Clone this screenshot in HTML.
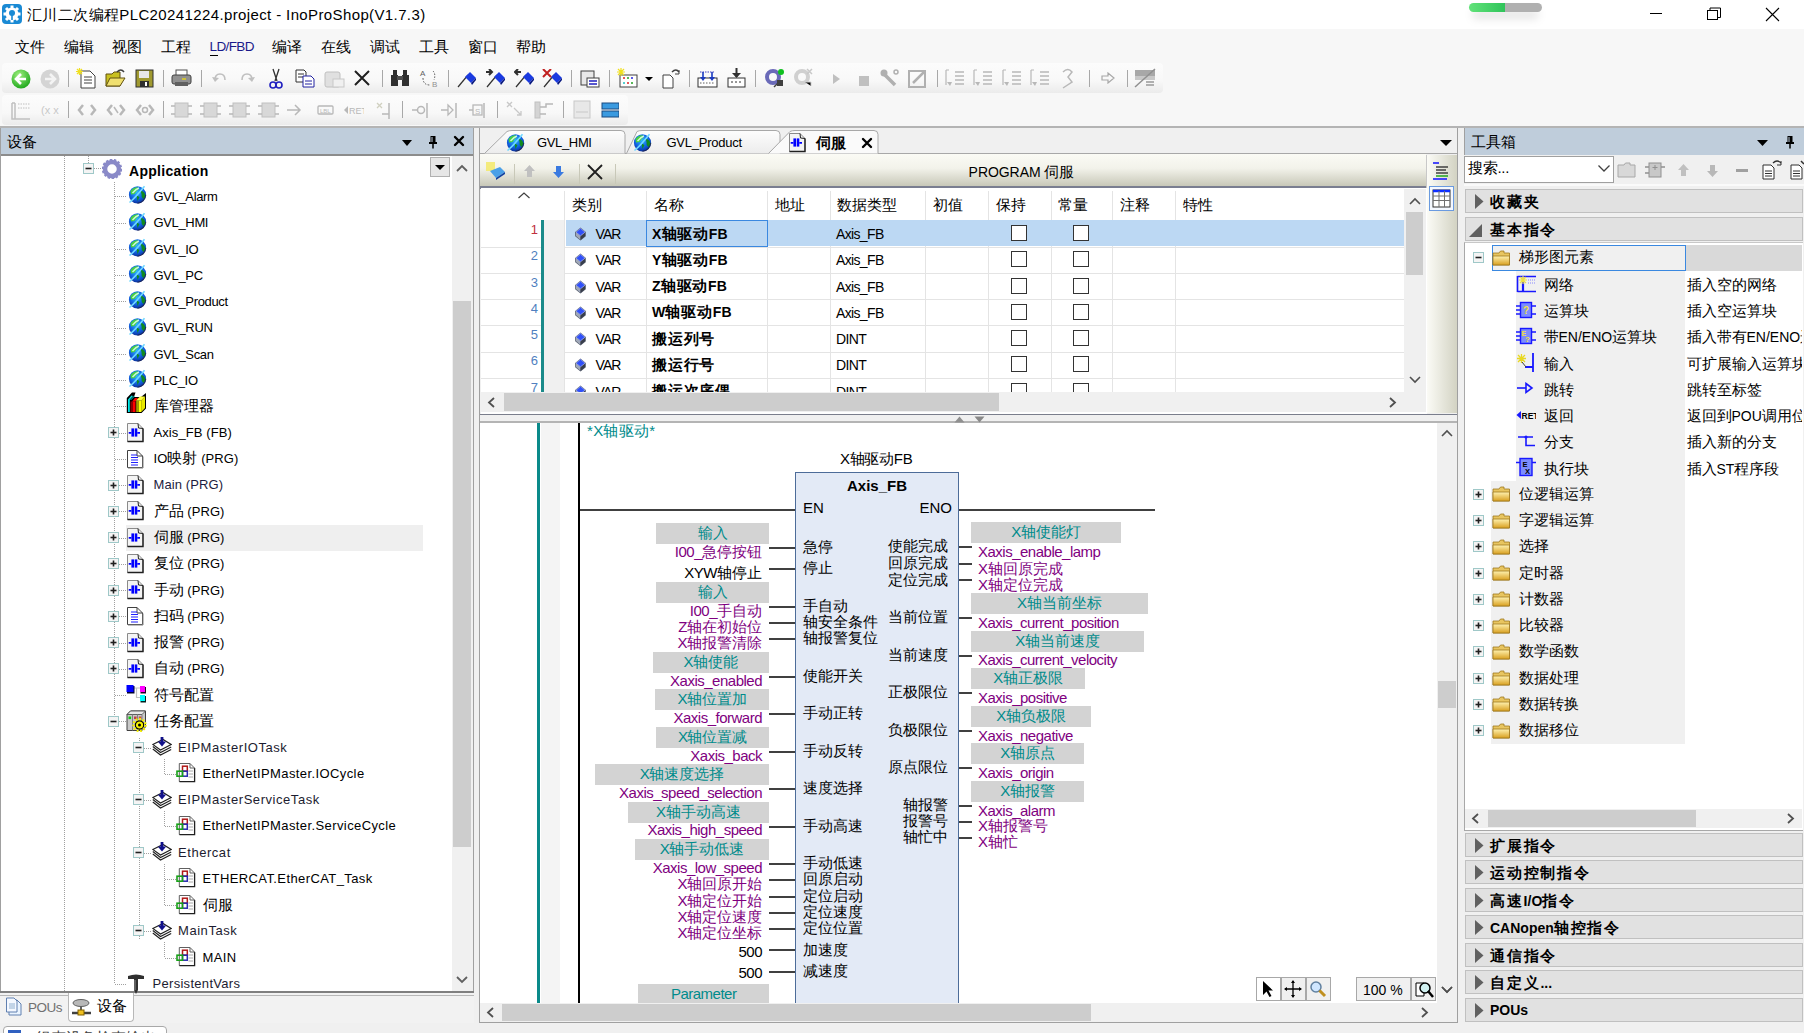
<!DOCTYPE html><html><head><meta charset="utf-8"><style>
html,body{margin:0;padding:0;width:1804px;height:1033px;overflow:hidden;background:#f0f0f0;position:relative}
body div{position:absolute}
.t{white-space:nowrap;line-height:1;font-family:"Liberation Sans",sans-serif}
span{line-height:1}
.nm span{letter-spacing:0.75px}
.ls0 span{letter-spacing:0}
.acc span{letter-spacing:1.8px}
</style></head><body>
<div style="left:0px;top:0px;width:1804px;height:29px;background:#fff"></div>
<svg style="position:absolute;left:2px;top:4px;" width="20" height="20" viewBox="0 0 20 20"><rect x="0" y="0" width="20" height="20" rx="4" fill="#1a8ad4"/>
<circle cx="10" cy="10" r="6.5" fill="#fff"/><path d="M10 1.5 V18.5 M1.5 10 H18.5 M4 4 L16 16 M16 4 L4 16" stroke="#fff" stroke-width="3"/>
<circle cx="10" cy="9" r="3" fill="#1a8ad4"/><path d="M10 11 V16" stroke="#1a8ad4" stroke-width="1.6"/></svg>
<div class="t" style="left:27px;top:6.6px;font-size:15px;color:#000;letter-spacing:0.38px"><span style="font-size:15px">汇川二次编程</span>PLC20241224.project - InoProShop(V1.7.3)</div>
<div style="left:1472px;top:10px;width:67px;height:9px;border-radius:5px;background:rgba(0,0,0,0.10);filter:blur(4px)"></div>
<div style="left:1469px;top:3px;width:73px;height:9px;border-radius:4.5px;background:linear-gradient(to right,#62e27a 0,#2fc45a 36px,#b0b0b0 36px)"></div>
<div style="left:1650px;top:13px;width:12px;height:1px;background:#000"></div>
<svg style="position:absolute;left:1706px;top:7px;" width="16" height="14" viewBox="0 0 16 14"><rect x="1.5" y="3.5" width="10" height="9" fill="none" stroke="#000"/><path d="M4 3.5 V1 H14.5 V10.5 H12" fill="none" stroke="#000"/></svg>
<svg style="position:absolute;left:1765px;top:7px;" width="15" height="15" viewBox="0 0 15 15"><path d="M1 1 L14 14 M14 1 L1 14" stroke="#000" stroke-width="1.1"/></svg>
<div style="left:0px;top:29px;width:1804px;height:97px;background:#f7f7f7"></div>
<div class="t" style="left:15px;top:38.7px;font-size:15px;color:#000;"><span style="font-size:15px">文件</span></div>
<div class="t" style="left:64px;top:38.7px;font-size:15px;color:#000;"><span style="font-size:15px">编辑</span></div>
<div class="t" style="left:112px;top:38.7px;font-size:15px;color:#000;"><span style="font-size:15px">视图</span></div>
<div class="t" style="left:161px;top:38.7px;font-size:15px;color:#000;"><span style="font-size:15px">工程</span></div>
<div class="t" style="left:272px;top:38.7px;font-size:15px;color:#000;"><span style="font-size:15px">编译</span></div>
<div class="t" style="left:321px;top:38.7px;font-size:15px;color:#000;"><span style="font-size:15px">在线</span></div>
<div class="t" style="left:370px;top:38.7px;font-size:15px;color:#000;"><span style="font-size:15px">调试</span></div>
<div class="t" style="left:419px;top:38.7px;font-size:15px;color:#000;"><span style="font-size:15px">工具</span></div>
<div class="t" style="left:468px;top:38.7px;font-size:15px;color:#000;"><span style="font-size:15px">窗口</span></div>
<div class="t" style="left:516px;top:38.7px;font-size:15px;color:#000;"><span style="font-size:15px">帮助</span></div>
<div class="t" style="left:209.5px;top:40px;font-size:13.5px;color:#1a1a8a;letter-spacing:-0.6px">LD/FBD</div>
<div style="left:209.5px;top:55px;width:8px;height:1px;background:#000"></div>
<div style="left:2px;top:63px;width:1161px;height:30px;background:linear-gradient(#fcfcfc,#f8f8f8 60%,#ebebeb);border-radius:4px"></div>
<div style="left:2px;top:95px;width:626px;height:30px;background:linear-gradient(#fcfcfc,#f8f8f8 60%,#ebebeb);border-radius:4px"></div>
<div style="left:0px;top:126px;width:474px;height:1px;background:#a8a8a8"></div>
<div style="left:0px;top:127px;width:474px;height:28px;background:#bfcddb"></div>
<div style="left:0px;top:154px;width:474px;height:2px;background:#8c8c8c"></div>
<div style="left:0px;top:127px;width:1px;height:866px;background:#a0a0a0"></div>
<div style="left:473px;top:127px;width:1px;height:866px;background:#a0a0a0"></div>
<div class="t" style="left:7px;top:133.5px;font-size:15px;color:#000;"><span style="font-size:15px">设备</span></div>
<svg style="position:absolute;left:402px;top:140px;" width="10" height="6" viewBox="0 0 10 6"><path d="M0 0 H10 L5.0 6Z" fill="#000"/></svg>
<svg style="position:absolute;left:428px;top:135px;" width="10" height="14" viewBox="0 0 10 14"><path d="M2.5 1 H7.5 V7 H9 V9 H1 V7 H2.5Z" fill="#000"/><path d="M5 9 V13.5" stroke="#000" stroke-width="1.5"/><path d="M4 2 V7" stroke="#bfcddb" stroke-width="1"/></svg>
<svg style="position:absolute;left:453px;top:135px;" width="12" height="12" viewBox="0 0 12 12"><path d="M2 2 L10 10 M10 2 L2 10" stroke="#000" stroke-width="2.4" stroke-linecap="round"/></svg>
<div style="left:1px;top:156px;width:472px;height:836px;background:#fff"></div>
<div style="left:0px;top:991px;width:474px;height:2px;background:#808080"></div>
<div style="left:452px;top:156px;width:21px;height:835px;background:#f0f0f0"></div>
<div style="left:453px;top:301px;width:18px;height:546px;background:#cdcdcd"></div>
<svg style="position:absolute;left:455px;top:163px;" width="14" height="10" viewBox="0 0 14 10"><path d="M2 8 L7 3 L12 8" fill="none" stroke="#606060" stroke-width="1.8"/></svg>
<svg style="position:absolute;left:455px;top:975px;" width="14" height="10" viewBox="0 0 14 10"><path d="M2 2 L7 7 L12 2" fill="none" stroke="#606060" stroke-width="1.8"/></svg>
<div style="left:430px;top:157px;width:20px;height:20px;background:#e6e6e6;border:1px solid #b0b0b0;box-sizing:border-box"></div>
<div style="left:0px;top:991px;width:474px;height:2px;background:#808080"></div>
<svg style="position:absolute;left:435px;top:165px;" width="10" height="5" viewBox="0 0 10 5"><path d="M0 0 H10 L5.0 5Z" fill="#000"/></svg>
<div style="left:0px;top:993px;width:478px;height:30px;background:#f2f2f2"></div>
<div style="left:0px;top:995px;width:478px;height:1px;background:#b8b8b8"></div>
<div style="left:68px;top:993px;width:66px;height:29px;background:#fff;border:1px solid #b8b8b8;border-top:none;border-radius:0 0 4px 4px;box-sizing:border-box"></div>
<div style="left:0px;top:1023px;width:478px;height:10px;background:#f0f0f0"></div>
<div style="left:3px;top:1026px;width:164px;height:10px;background:#fff;border:1px solid #a8a8a8;border-radius:4px 4px 0 0;box-sizing:border-box"></div>
<div style="left:64px;top:156px;width:1px;height:836px;background:repeating-linear-gradient(to bottom,#a0a0a0 0 1px,transparent 1px 2px)"></div>
<div style="left:114px;top:182px;width:1px;height:801px;background:repeating-linear-gradient(to bottom,#a0a0a0 0 1px,transparent 1px 2px)"></div>
<div style="left:139px;top:738px;width:1px;height:202px;background:repeating-linear-gradient(to bottom,#a0a0a0 0 1px,transparent 1px 2px)"></div>
<div style="left:88px;top:156px;width:1px;height:7px;background:repeating-linear-gradient(to bottom,#a0a0a0 0 1px,transparent 1px 2px)"></div>
<svg style="position:absolute;left:83px;top:162.5px;" width="11" height="11" viewBox="0 0 11 11"><rect x="0.5" y="0.5" width="10" height="10" fill="#f4f4f4" stroke="#9fc8c8"/><path d="M2.5 5.5 H8.5" stroke="#202020" stroke-width="1.6"/></svg>
<div style="left:94px;top:168.0px;width:7px;height:1px;background:repeating-linear-gradient(to right,#a0a0a0 0 1px,transparent 1px 2px)"></div>
<svg style="position:absolute;left:102px;top:159.0px;" width="20" height="20" viewBox="0 0 20 20"><circle cx="10" cy="10" r="7" fill="none" stroke="#8a8ac8" stroke-width="4.5"/><circle cx="10" cy="10" r="9" fill="none" stroke="#8a8ac8" stroke-width="2.5" stroke-dasharray="2.4 1.6"/></svg>
<div class="t" style="left:129px;top:163.8px;font-size:14px;color:#000;font-weight:bold;letter-spacing:0.3px">Application</div>
<div style="left:115px;top:196.25px;width:11px;height:1px;background:repeating-linear-gradient(to right,#a0a0a0 0 1px,transparent 1px 2px)"></div>
<svg style="position:absolute;left:127px;top:184.25px;" width="21" height="21" viewBox="0 0 21 21"><defs><radialGradient id="gg" cx="0.45" cy="0.35" r="0.75"><stop offset="0" stop-color="#30b8ff"/><stop offset="0.55" stop-color="#1060e0"/><stop offset="1" stop-color="#0a2080"/></radialGradient></defs>
<circle cx="10.5" cy="10.8" r="8.6" fill="url(#gg)"/>
<path d="M3.5 7 Q6 3.5 10.5 3.2 L12 5 Q9 7 7.5 10 L4 10.5Z" fill="#48d040"/><path d="M13.5 6.5 Q18 7.5 18.5 12 L16.5 15 Q14 13 14.5 10Z" fill="#108a20"/><path d="M9.5 11.5 L12.5 13 L10.5 17Z" fill="#108a20"/>
<path d="M2.5 18.5 Q8 14 17.5 2.2" fill="none" stroke="#70d8ff" stroke-width="1.6"/><path d="M5.5 9 Q9 5 12 4" fill="none" stroke="#e8ffff" stroke-width="1.4" opacity="0.8"/>
<path d="M18.8 11 Q18 18 10.5 19.4" fill="none" stroke="#202040" stroke-width="1.1" opacity="0.7"/></svg>
<div class="t" style="left:153.5px;top:190.05px;font-size:13px;color:#000;letter-spacing:-0.35px">GVL_Alarm</div>
<div style="left:115px;top:222.5px;width:11px;height:1px;background:repeating-linear-gradient(to right,#a0a0a0 0 1px,transparent 1px 2px)"></div>
<svg style="position:absolute;left:127px;top:210.5px;" width="21" height="21" viewBox="0 0 21 21"><defs><radialGradient id="gg" cx="0.45" cy="0.35" r="0.75"><stop offset="0" stop-color="#30b8ff"/><stop offset="0.55" stop-color="#1060e0"/><stop offset="1" stop-color="#0a2080"/></radialGradient></defs>
<circle cx="10.5" cy="10.8" r="8.6" fill="url(#gg)"/>
<path d="M3.5 7 Q6 3.5 10.5 3.2 L12 5 Q9 7 7.5 10 L4 10.5Z" fill="#48d040"/><path d="M13.5 6.5 Q18 7.5 18.5 12 L16.5 15 Q14 13 14.5 10Z" fill="#108a20"/><path d="M9.5 11.5 L12.5 13 L10.5 17Z" fill="#108a20"/>
<path d="M2.5 18.5 Q8 14 17.5 2.2" fill="none" stroke="#70d8ff" stroke-width="1.6"/><path d="M5.5 9 Q9 5 12 4" fill="none" stroke="#e8ffff" stroke-width="1.4" opacity="0.8"/>
<path d="M18.8 11 Q18 18 10.5 19.4" fill="none" stroke="#202040" stroke-width="1.1" opacity="0.7"/></svg>
<div class="t" style="left:153.5px;top:216.3px;font-size:13px;color:#000;letter-spacing:-0.35px">GVL_HMI</div>
<div style="left:115px;top:248.75px;width:11px;height:1px;background:repeating-linear-gradient(to right,#a0a0a0 0 1px,transparent 1px 2px)"></div>
<svg style="position:absolute;left:127px;top:236.75px;" width="21" height="21" viewBox="0 0 21 21"><defs><radialGradient id="gg" cx="0.45" cy="0.35" r="0.75"><stop offset="0" stop-color="#30b8ff"/><stop offset="0.55" stop-color="#1060e0"/><stop offset="1" stop-color="#0a2080"/></radialGradient></defs>
<circle cx="10.5" cy="10.8" r="8.6" fill="url(#gg)"/>
<path d="M3.5 7 Q6 3.5 10.5 3.2 L12 5 Q9 7 7.5 10 L4 10.5Z" fill="#48d040"/><path d="M13.5 6.5 Q18 7.5 18.5 12 L16.5 15 Q14 13 14.5 10Z" fill="#108a20"/><path d="M9.5 11.5 L12.5 13 L10.5 17Z" fill="#108a20"/>
<path d="M2.5 18.5 Q8 14 17.5 2.2" fill="none" stroke="#70d8ff" stroke-width="1.6"/><path d="M5.5 9 Q9 5 12 4" fill="none" stroke="#e8ffff" stroke-width="1.4" opacity="0.8"/>
<path d="M18.8 11 Q18 18 10.5 19.4" fill="none" stroke="#202040" stroke-width="1.1" opacity="0.7"/></svg>
<div class="t" style="left:153.5px;top:242.55px;font-size:13px;color:#000;letter-spacing:-0.35px">GVL_IO</div>
<div style="left:115px;top:275.0px;width:11px;height:1px;background:repeating-linear-gradient(to right,#a0a0a0 0 1px,transparent 1px 2px)"></div>
<svg style="position:absolute;left:127px;top:263.0px;" width="21" height="21" viewBox="0 0 21 21"><defs><radialGradient id="gg" cx="0.45" cy="0.35" r="0.75"><stop offset="0" stop-color="#30b8ff"/><stop offset="0.55" stop-color="#1060e0"/><stop offset="1" stop-color="#0a2080"/></radialGradient></defs>
<circle cx="10.5" cy="10.8" r="8.6" fill="url(#gg)"/>
<path d="M3.5 7 Q6 3.5 10.5 3.2 L12 5 Q9 7 7.5 10 L4 10.5Z" fill="#48d040"/><path d="M13.5 6.5 Q18 7.5 18.5 12 L16.5 15 Q14 13 14.5 10Z" fill="#108a20"/><path d="M9.5 11.5 L12.5 13 L10.5 17Z" fill="#108a20"/>
<path d="M2.5 18.5 Q8 14 17.5 2.2" fill="none" stroke="#70d8ff" stroke-width="1.6"/><path d="M5.5 9 Q9 5 12 4" fill="none" stroke="#e8ffff" stroke-width="1.4" opacity="0.8"/>
<path d="M18.8 11 Q18 18 10.5 19.4" fill="none" stroke="#202040" stroke-width="1.1" opacity="0.7"/></svg>
<div class="t" style="left:153.5px;top:268.8px;font-size:13px;color:#000;letter-spacing:-0.35px">GVL_PC</div>
<div style="left:115px;top:301.25px;width:11px;height:1px;background:repeating-linear-gradient(to right,#a0a0a0 0 1px,transparent 1px 2px)"></div>
<svg style="position:absolute;left:127px;top:289.25px;" width="21" height="21" viewBox="0 0 21 21"><defs><radialGradient id="gg" cx="0.45" cy="0.35" r="0.75"><stop offset="0" stop-color="#30b8ff"/><stop offset="0.55" stop-color="#1060e0"/><stop offset="1" stop-color="#0a2080"/></radialGradient></defs>
<circle cx="10.5" cy="10.8" r="8.6" fill="url(#gg)"/>
<path d="M3.5 7 Q6 3.5 10.5 3.2 L12 5 Q9 7 7.5 10 L4 10.5Z" fill="#48d040"/><path d="M13.5 6.5 Q18 7.5 18.5 12 L16.5 15 Q14 13 14.5 10Z" fill="#108a20"/><path d="M9.5 11.5 L12.5 13 L10.5 17Z" fill="#108a20"/>
<path d="M2.5 18.5 Q8 14 17.5 2.2" fill="none" stroke="#70d8ff" stroke-width="1.6"/><path d="M5.5 9 Q9 5 12 4" fill="none" stroke="#e8ffff" stroke-width="1.4" opacity="0.8"/>
<path d="M18.8 11 Q18 18 10.5 19.4" fill="none" stroke="#202040" stroke-width="1.1" opacity="0.7"/></svg>
<div class="t" style="left:153.5px;top:295.05px;font-size:13px;color:#000;letter-spacing:-0.35px">GVL_Product</div>
<div style="left:115px;top:327.5px;width:11px;height:1px;background:repeating-linear-gradient(to right,#a0a0a0 0 1px,transparent 1px 2px)"></div>
<svg style="position:absolute;left:127px;top:315.5px;" width="21" height="21" viewBox="0 0 21 21"><defs><radialGradient id="gg" cx="0.45" cy="0.35" r="0.75"><stop offset="0" stop-color="#30b8ff"/><stop offset="0.55" stop-color="#1060e0"/><stop offset="1" stop-color="#0a2080"/></radialGradient></defs>
<circle cx="10.5" cy="10.8" r="8.6" fill="url(#gg)"/>
<path d="M3.5 7 Q6 3.5 10.5 3.2 L12 5 Q9 7 7.5 10 L4 10.5Z" fill="#48d040"/><path d="M13.5 6.5 Q18 7.5 18.5 12 L16.5 15 Q14 13 14.5 10Z" fill="#108a20"/><path d="M9.5 11.5 L12.5 13 L10.5 17Z" fill="#108a20"/>
<path d="M2.5 18.5 Q8 14 17.5 2.2" fill="none" stroke="#70d8ff" stroke-width="1.6"/><path d="M5.5 9 Q9 5 12 4" fill="none" stroke="#e8ffff" stroke-width="1.4" opacity="0.8"/>
<path d="M18.8 11 Q18 18 10.5 19.4" fill="none" stroke="#202040" stroke-width="1.1" opacity="0.7"/></svg>
<div class="t" style="left:153.5px;top:321.3px;font-size:13px;color:#000;letter-spacing:-0.35px">GVL_RUN</div>
<div style="left:115px;top:353.75px;width:11px;height:1px;background:repeating-linear-gradient(to right,#a0a0a0 0 1px,transparent 1px 2px)"></div>
<svg style="position:absolute;left:127px;top:341.75px;" width="21" height="21" viewBox="0 0 21 21"><defs><radialGradient id="gg" cx="0.45" cy="0.35" r="0.75"><stop offset="0" stop-color="#30b8ff"/><stop offset="0.55" stop-color="#1060e0"/><stop offset="1" stop-color="#0a2080"/></radialGradient></defs>
<circle cx="10.5" cy="10.8" r="8.6" fill="url(#gg)"/>
<path d="M3.5 7 Q6 3.5 10.5 3.2 L12 5 Q9 7 7.5 10 L4 10.5Z" fill="#48d040"/><path d="M13.5 6.5 Q18 7.5 18.5 12 L16.5 15 Q14 13 14.5 10Z" fill="#108a20"/><path d="M9.5 11.5 L12.5 13 L10.5 17Z" fill="#108a20"/>
<path d="M2.5 18.5 Q8 14 17.5 2.2" fill="none" stroke="#70d8ff" stroke-width="1.6"/><path d="M5.5 9 Q9 5 12 4" fill="none" stroke="#e8ffff" stroke-width="1.4" opacity="0.8"/>
<path d="M18.8 11 Q18 18 10.5 19.4" fill="none" stroke="#202040" stroke-width="1.1" opacity="0.7"/></svg>
<div class="t" style="left:153.5px;top:347.55px;font-size:13px;color:#000;letter-spacing:-0.35px">GVL_Scan</div>
<div style="left:115px;top:380.0px;width:11px;height:1px;background:repeating-linear-gradient(to right,#a0a0a0 0 1px,transparent 1px 2px)"></div>
<svg style="position:absolute;left:127px;top:368.0px;" width="21" height="21" viewBox="0 0 21 21"><defs><radialGradient id="gg" cx="0.45" cy="0.35" r="0.75"><stop offset="0" stop-color="#30b8ff"/><stop offset="0.55" stop-color="#1060e0"/><stop offset="1" stop-color="#0a2080"/></radialGradient></defs>
<circle cx="10.5" cy="10.8" r="8.6" fill="url(#gg)"/>
<path d="M3.5 7 Q6 3.5 10.5 3.2 L12 5 Q9 7 7.5 10 L4 10.5Z" fill="#48d040"/><path d="M13.5 6.5 Q18 7.5 18.5 12 L16.5 15 Q14 13 14.5 10Z" fill="#108a20"/><path d="M9.5 11.5 L12.5 13 L10.5 17Z" fill="#108a20"/>
<path d="M2.5 18.5 Q8 14 17.5 2.2" fill="none" stroke="#70d8ff" stroke-width="1.6"/><path d="M5.5 9 Q9 5 12 4" fill="none" stroke="#e8ffff" stroke-width="1.4" opacity="0.8"/>
<path d="M18.8 11 Q18 18 10.5 19.4" fill="none" stroke="#202040" stroke-width="1.1" opacity="0.7"/></svg>
<div class="t" style="left:153.5px;top:373.8px;font-size:13px;color:#000;letter-spacing:-0.35px">PLC_IO</div>
<div style="left:115px;top:406.25px;width:11px;height:1px;background:repeating-linear-gradient(to right,#a0a0a0 0 1px,transparent 1px 2px)"></div>
<svg style="position:absolute;left:126px;top:392.25px;" width="21" height="22" viewBox="0 0 21 22"><path d="M0.8 21 V6 L6 0.5 H9.5 L8 5 H15 L20 1 V16.5 L15.5 21Z" fill="#000"/><path d="M2 20 V7.5 L5.5 3.5 L7 4 L3.8 7.5 V20Z" fill="#00e8e8"/><path d="M4 8 L8 4 H9 L5 8Z" fill="#00c8c8"/><rect x="4.5" y="9.5" width="2.3" height="10.5" fill="#900000"/><rect x="6.8" y="9.5" width="2.7" height="10.5" fill="#ff0000"/><path d="M6 9.5 L9 6 H12 L9.5 9.5Z" fill="#ff0000"/><rect x="10.2" y="8.5" width="2.5" height="11.5" fill="#a0a000"/><rect x="12.7" y="8.5" width="2.5" height="11.5" fill="#ffff00"/><path d="M15.2 8.5 L19 4.5 V16 L15.2 20Z" fill="#e8e800"/><path d="M10 8.5 L14 4.5 H19 L15.2 8.5Z" fill="#ffff40"/></svg>
<div class="t" style="left:153.5px;top:398.05px;font-size:15px;color:#000;"><span style="font-size:15px">库管理器</span></div>
<svg style="position:absolute;left:108px;top:427.0px;" width="11" height="11" viewBox="0 0 11 11"><rect x="0.5" y="0.5" width="10" height="10" fill="#f4f4f4" stroke="#9fc8c8"/><path d="M2.5 5.5 H8.5" stroke="#202020" stroke-width="1.6"/><path d="M5.5 2.5 V8.5" stroke="#202020" stroke-width="1.6"/></svg>
<div style="left:119px;top:432.5px;width:7px;height:1px;background:repeating-linear-gradient(to right,#a0a0a0 0 1px,transparent 1px 2px)"></div>
<svg style="position:absolute;left:126px;top:421.5px;" width="18" height="21" viewBox="0 0 18 21"><path d="M1.5 1.5 H12 L17 6.5 V19.5 H1.5Z" fill="#f4f4f4" stroke="#8a8a8a" stroke-width="1"/>
<path d="M1.5 19.5 H17 V6.5" fill="none" stroke="#202020" stroke-width="1.4"/><path d="M12 1.5 L12.5 6 L17 6.5" fill="none" stroke="#202020" stroke-width="1"/>
<rect x="5.4" y="6.4" width="2.6" height="8.2" fill="#0000ff"/><rect x="8.7" y="6.4" width="2.6" height="8.2" fill="#0000ff"/>
<path d="M2.7 10.8 H5.4 M11.3 10.8 H14" stroke="#0000ff" stroke-width="1.7"/></svg>
<div class="t ls0" style="left:153.5px;top:425.8px;font-size:13px;color:#000;letter-spacing:0.1px">Axis_FB&nbsp;(FB)</div>
<div style="left:115px;top:458.75px;width:11px;height:1px;background:repeating-linear-gradient(to right,#a0a0a0 0 1px,transparent 1px 2px)"></div>
<svg style="position:absolute;left:126px;top:448.75px;" width="18" height="20" viewBox="0 0 18 20"><path d="M1.5 1.5 H11 L16.5 7 V18.5 H1.5Z" fill="#fff" stroke="#404040" stroke-width="1"/>
<path d="M11 1.5 V7 H16.5" fill="none" stroke="#404040"/><path d="M2 19 H17 V7.5" fill="none" stroke="#808080"/>
<path d="M5 6 H11 M5 8.5 H12 M5 11 H12 M5 13.5 H12 M5 16 H12" stroke="#2020ff" stroke-width="1.2"/></svg>
<div class="t ls0" style="left:153.5px;top:450.35px;font-size:13px;color:#000;letter-spacing:0.1px">IO<span style="font-size:15px">映射</span>&nbsp;(PRG)</div>
<svg style="position:absolute;left:108px;top:479.5px;" width="11" height="11" viewBox="0 0 11 11"><rect x="0.5" y="0.5" width="10" height="10" fill="#f4f4f4" stroke="#9fc8c8"/><path d="M2.5 5.5 H8.5" stroke="#202020" stroke-width="1.6"/><path d="M5.5 2.5 V8.5" stroke="#202020" stroke-width="1.6"/></svg>
<div style="left:119px;top:485.0px;width:7px;height:1px;background:repeating-linear-gradient(to right,#a0a0a0 0 1px,transparent 1px 2px)"></div>
<svg style="position:absolute;left:126px;top:474.0px;" width="18" height="21" viewBox="0 0 18 21"><path d="M1.5 1.5 H12 L17 6.5 V19.5 H1.5Z" fill="#f4f4f4" stroke="#8a8a8a" stroke-width="1"/>
<path d="M1.5 19.5 H17 V6.5" fill="none" stroke="#202020" stroke-width="1.4"/><path d="M12 1.5 L12.5 6 L17 6.5" fill="none" stroke="#202020" stroke-width="1"/>
<rect x="5.4" y="6.4" width="2.6" height="8.2" fill="#0000ff"/><rect x="8.7" y="6.4" width="2.6" height="8.2" fill="#0000ff"/>
<path d="M2.7 10.8 H5.4 M11.3 10.8 H14" stroke="#0000ff" stroke-width="1.7"/></svg>
<div class="t ls0" style="left:153.5px;top:478.3px;font-size:13px;color:#1c1c40;letter-spacing:0.1px">Main&nbsp;(PRG)</div>
<svg style="position:absolute;left:108px;top:505.75px;" width="11" height="11" viewBox="0 0 11 11"><rect x="0.5" y="0.5" width="10" height="10" fill="#f4f4f4" stroke="#9fc8c8"/><path d="M2.5 5.5 H8.5" stroke="#202020" stroke-width="1.6"/><path d="M5.5 2.5 V8.5" stroke="#202020" stroke-width="1.6"/></svg>
<div style="left:119px;top:511.25px;width:7px;height:1px;background:repeating-linear-gradient(to right,#a0a0a0 0 1px,transparent 1px 2px)"></div>
<svg style="position:absolute;left:126px;top:500.25px;" width="18" height="21" viewBox="0 0 18 21"><path d="M1.5 1.5 H12 L17 6.5 V19.5 H1.5Z" fill="#f4f4f4" stroke="#8a8a8a" stroke-width="1"/>
<path d="M1.5 19.5 H17 V6.5" fill="none" stroke="#202020" stroke-width="1.4"/><path d="M12 1.5 L12.5 6 L17 6.5" fill="none" stroke="#202020" stroke-width="1"/>
<rect x="5.4" y="6.4" width="2.6" height="8.2" fill="#0000ff"/><rect x="8.7" y="6.4" width="2.6" height="8.2" fill="#0000ff"/>
<path d="M2.7 10.8 H5.4 M11.3 10.8 H14" stroke="#0000ff" stroke-width="1.7"/></svg>
<div class="t ls0" style="left:153.5px;top:502.85px;font-size:13px;color:#000;letter-spacing:0.1px"><span style="font-size:15px">产品</span>&nbsp;(PRG)</div>
<div style="left:126px;top:524.5px;width:297px;height:26px;background:#efefef"></div>
<svg style="position:absolute;left:108px;top:532.0px;" width="11" height="11" viewBox="0 0 11 11"><rect x="0.5" y="0.5" width="10" height="10" fill="#f4f4f4" stroke="#9fc8c8"/><path d="M2.5 5.5 H8.5" stroke="#202020" stroke-width="1.6"/><path d="M5.5 2.5 V8.5" stroke="#202020" stroke-width="1.6"/></svg>
<div style="left:119px;top:537.5px;width:7px;height:1px;background:repeating-linear-gradient(to right,#a0a0a0 0 1px,transparent 1px 2px)"></div>
<svg style="position:absolute;left:126px;top:526.5px;" width="18" height="21" viewBox="0 0 18 21"><path d="M1.5 1.5 H12 L17 6.5 V19.5 H1.5Z" fill="#f4f4f4" stroke="#8a8a8a" stroke-width="1"/>
<path d="M1.5 19.5 H17 V6.5" fill="none" stroke="#202020" stroke-width="1.4"/><path d="M12 1.5 L12.5 6 L17 6.5" fill="none" stroke="#202020" stroke-width="1"/>
<rect x="5.4" y="6.4" width="2.6" height="8.2" fill="#0000ff"/><rect x="8.7" y="6.4" width="2.6" height="8.2" fill="#0000ff"/>
<path d="M2.7 10.8 H5.4 M11.3 10.8 H14" stroke="#0000ff" stroke-width="1.7"/></svg>
<div class="t ls0" style="left:153.5px;top:529.1px;font-size:13px;color:#000;letter-spacing:0.1px"><span style="font-size:15px">伺服</span>&nbsp;(PRG)</div>
<svg style="position:absolute;left:108px;top:558.25px;" width="11" height="11" viewBox="0 0 11 11"><rect x="0.5" y="0.5" width="10" height="10" fill="#f4f4f4" stroke="#9fc8c8"/><path d="M2.5 5.5 H8.5" stroke="#202020" stroke-width="1.6"/><path d="M5.5 2.5 V8.5" stroke="#202020" stroke-width="1.6"/></svg>
<div style="left:119px;top:563.75px;width:7px;height:1px;background:repeating-linear-gradient(to right,#a0a0a0 0 1px,transparent 1px 2px)"></div>
<svg style="position:absolute;left:126px;top:552.75px;" width="18" height="21" viewBox="0 0 18 21"><path d="M1.5 1.5 H12 L17 6.5 V19.5 H1.5Z" fill="#f4f4f4" stroke="#8a8a8a" stroke-width="1"/>
<path d="M1.5 19.5 H17 V6.5" fill="none" stroke="#202020" stroke-width="1.4"/><path d="M12 1.5 L12.5 6 L17 6.5" fill="none" stroke="#202020" stroke-width="1"/>
<rect x="5.4" y="6.4" width="2.6" height="8.2" fill="#0000ff"/><rect x="8.7" y="6.4" width="2.6" height="8.2" fill="#0000ff"/>
<path d="M2.7 10.8 H5.4 M11.3 10.8 H14" stroke="#0000ff" stroke-width="1.7"/></svg>
<div class="t ls0" style="left:153.5px;top:555.35px;font-size:13px;color:#000;letter-spacing:0.1px"><span style="font-size:15px">复位</span>&nbsp;(PRG)</div>
<svg style="position:absolute;left:108px;top:584.5px;" width="11" height="11" viewBox="0 0 11 11"><rect x="0.5" y="0.5" width="10" height="10" fill="#f4f4f4" stroke="#9fc8c8"/><path d="M2.5 5.5 H8.5" stroke="#202020" stroke-width="1.6"/><path d="M5.5 2.5 V8.5" stroke="#202020" stroke-width="1.6"/></svg>
<div style="left:119px;top:590.0px;width:7px;height:1px;background:repeating-linear-gradient(to right,#a0a0a0 0 1px,transparent 1px 2px)"></div>
<svg style="position:absolute;left:126px;top:579.0px;" width="18" height="21" viewBox="0 0 18 21"><path d="M1.5 1.5 H12 L17 6.5 V19.5 H1.5Z" fill="#f4f4f4" stroke="#8a8a8a" stroke-width="1"/>
<path d="M1.5 19.5 H17 V6.5" fill="none" stroke="#202020" stroke-width="1.4"/><path d="M12 1.5 L12.5 6 L17 6.5" fill="none" stroke="#202020" stroke-width="1"/>
<rect x="5.4" y="6.4" width="2.6" height="8.2" fill="#0000ff"/><rect x="8.7" y="6.4" width="2.6" height="8.2" fill="#0000ff"/>
<path d="M2.7 10.8 H5.4 M11.3 10.8 H14" stroke="#0000ff" stroke-width="1.7"/></svg>
<div class="t ls0" style="left:153.5px;top:581.6px;font-size:13px;color:#000;letter-spacing:0.1px"><span style="font-size:15px">手动</span>&nbsp;(PRG)</div>
<svg style="position:absolute;left:108px;top:610.75px;" width="11" height="11" viewBox="0 0 11 11"><rect x="0.5" y="0.5" width="10" height="10" fill="#f4f4f4" stroke="#9fc8c8"/><path d="M2.5 5.5 H8.5" stroke="#202020" stroke-width="1.6"/><path d="M5.5 2.5 V8.5" stroke="#202020" stroke-width="1.6"/></svg>
<div style="left:119px;top:616.25px;width:7px;height:1px;background:repeating-linear-gradient(to right,#a0a0a0 0 1px,transparent 1px 2px)"></div>
<svg style="position:absolute;left:126px;top:606.25px;" width="18" height="20" viewBox="0 0 18 20"><path d="M1.5 1.5 H11 L16.5 7 V18.5 H1.5Z" fill="#fff" stroke="#404040" stroke-width="1"/>
<path d="M11 1.5 V7 H16.5" fill="none" stroke="#404040"/><path d="M2 19 H17 V7.5" fill="none" stroke="#808080"/>
<path d="M5 6 H11 M5 8.5 H12 M5 11 H12 M5 13.5 H12 M5 16 H12" stroke="#2020ff" stroke-width="1.2"/></svg>
<div class="t ls0" style="left:153.5px;top:607.85px;font-size:13px;color:#000;letter-spacing:0.1px"><span style="font-size:15px">扫码</span>&nbsp;(PRG)</div>
<svg style="position:absolute;left:108px;top:637.0px;" width="11" height="11" viewBox="0 0 11 11"><rect x="0.5" y="0.5" width="10" height="10" fill="#f4f4f4" stroke="#9fc8c8"/><path d="M2.5 5.5 H8.5" stroke="#202020" stroke-width="1.6"/><path d="M5.5 2.5 V8.5" stroke="#202020" stroke-width="1.6"/></svg>
<div style="left:119px;top:642.5px;width:7px;height:1px;background:repeating-linear-gradient(to right,#a0a0a0 0 1px,transparent 1px 2px)"></div>
<svg style="position:absolute;left:126px;top:631.5px;" width="18" height="21" viewBox="0 0 18 21"><path d="M1.5 1.5 H12 L17 6.5 V19.5 H1.5Z" fill="#f4f4f4" stroke="#8a8a8a" stroke-width="1"/>
<path d="M1.5 19.5 H17 V6.5" fill="none" stroke="#202020" stroke-width="1.4"/><path d="M12 1.5 L12.5 6 L17 6.5" fill="none" stroke="#202020" stroke-width="1"/>
<rect x="5.4" y="6.4" width="2.6" height="8.2" fill="#0000ff"/><rect x="8.7" y="6.4" width="2.6" height="8.2" fill="#0000ff"/>
<path d="M2.7 10.8 H5.4 M11.3 10.8 H14" stroke="#0000ff" stroke-width="1.7"/></svg>
<div class="t ls0" style="left:153.5px;top:634.1px;font-size:13px;color:#000;letter-spacing:0.1px"><span style="font-size:15px">报警</span>&nbsp;(PRG)</div>
<svg style="position:absolute;left:108px;top:663.25px;" width="11" height="11" viewBox="0 0 11 11"><rect x="0.5" y="0.5" width="10" height="10" fill="#f4f4f4" stroke="#9fc8c8"/><path d="M2.5 5.5 H8.5" stroke="#202020" stroke-width="1.6"/><path d="M5.5 2.5 V8.5" stroke="#202020" stroke-width="1.6"/></svg>
<div style="left:119px;top:668.75px;width:7px;height:1px;background:repeating-linear-gradient(to right,#a0a0a0 0 1px,transparent 1px 2px)"></div>
<svg style="position:absolute;left:126px;top:657.75px;" width="18" height="21" viewBox="0 0 18 21"><path d="M1.5 1.5 H12 L17 6.5 V19.5 H1.5Z" fill="#f4f4f4" stroke="#8a8a8a" stroke-width="1"/>
<path d="M1.5 19.5 H17 V6.5" fill="none" stroke="#202020" stroke-width="1.4"/><path d="M12 1.5 L12.5 6 L17 6.5" fill="none" stroke="#202020" stroke-width="1"/>
<rect x="5.4" y="6.4" width="2.6" height="8.2" fill="#0000ff"/><rect x="8.7" y="6.4" width="2.6" height="8.2" fill="#0000ff"/>
<path d="M2.7 10.8 H5.4 M11.3 10.8 H14" stroke="#0000ff" stroke-width="1.7"/></svg>
<div class="t ls0" style="left:153.5px;top:660.35px;font-size:13px;color:#000;letter-spacing:0.1px"><span style="font-size:15px">自动</span>&nbsp;(PRG)</div>
<div style="left:115px;top:695.0px;width:11px;height:1px;background:repeating-linear-gradient(to right,#a0a0a0 0 1px,transparent 1px 2px)"></div>
<svg style="position:absolute;left:126px;top:682.0px;" width="21" height="22" viewBox="0 0 21 22"><path d="M8 6 H15 M10.5 6 V15.5 H15" fill="none" stroke="#c0c0c0" stroke-width="1.2"/><rect x="1" y="4" width="7.5" height="7.5" fill="#000030"/><rect x="0.5" y="3" width="7" height="7" fill="#0000ff"/><rect x="14.5" y="5" width="5.5" height="6.5" fill="#200020"/><rect x="14" y="4" width="5" height="6" fill="#ff00ff"/><rect x="14.5" y="14" width="5.5" height="6.5" fill="#002020"/><rect x="14" y="13" width="5" height="6" fill="#00ffff"/></svg>
<div class="t" style="left:153.5px;top:686.8px;font-size:15px;color:#000;"><span style="font-size:15px">符号配置</span></div>
<svg style="position:absolute;left:108px;top:715.75px;" width="11" height="11" viewBox="0 0 11 11"><rect x="0.5" y="0.5" width="10" height="10" fill="#f4f4f4" stroke="#9fc8c8"/><path d="M2.5 5.5 H8.5" stroke="#202020" stroke-width="1.6"/></svg>
<div style="left:119px;top:721.25px;width:7px;height:1px;background:repeating-linear-gradient(to right,#a0a0a0 0 1px,transparent 1px 2px)"></div>
<svg style="position:absolute;left:126px;top:709.75px;" width="22" height="22" viewBox="0 0 22 22"><path d="M1 4.5 L4.5 1 H19.5 V17 L16 20.5 H1Z" fill="#c8c8c8" stroke="#404040"/><path d="M1 4.5 L4.5 1 H19.5 L16 4.5Z" fill="#e8e8e8" stroke="#404040" stroke-width="0.8"/><path d="M6.5 4.5 V20.5 M11.5 4.5 V20.5 M16 4.5 V20.5" stroke="#808080"/><rect x="2.5" y="6.5" width="2.6" height="2.6" fill="#10d010"/><rect x="8" y="6.5" width="2.6" height="2.6" fill="#c04040"/><rect x="12.8" y="6.5" width="2.6" height="2.6" fill="#c04040"/><circle cx="13.5" cy="15" r="4.2" fill="#f4f000" stroke="#000" stroke-width="1.2"/><circle cx="13.5" cy="15" r="6" fill="none" stroke="#f4f000" stroke-width="2.4" stroke-dasharray="1.8 1.6"/><circle cx="13.5" cy="15" r="1.5" fill="#000"/></svg>
<div class="t" style="left:153.5px;top:713.05px;font-size:15px;color:#000;"><span style="font-size:15px">任务配置</span></div>
<svg style="position:absolute;left:133px;top:741.5px;" width="11" height="11" viewBox="0 0 11 11"><rect x="0.5" y="0.5" width="10" height="10" fill="#f4f4f4" stroke="#9fc8c8"/><path d="M2.5 5.5 H8.5" stroke="#202020" stroke-width="1.6"/></svg>
<div style="left:144px;top:747.5px;width:7px;height:1px;background:repeating-linear-gradient(to right,#a0a0a0 0 1px,transparent 1px 2px)"></div>
<svg style="position:absolute;left:152px;top:737.0px;" width="20" height="20" viewBox="0 0 20 20"><path d="M0.8 12 L8.5 18 L19.2 12.5" fill="none" stroke="#202020" stroke-width="1.1"/><path d="M0.8 9.5 L8.5 15.5 L19.2 10" fill="none" stroke="#202020" stroke-width="1.1"/>
<path d="M0.8 7.5 L11 2.5 L19.2 7.5 L8.5 13Z" fill="#fff" stroke="#202020" stroke-width="1.1"/>
<path d="M10 0 V6" stroke="#10108a" stroke-width="2.8"/><path d="M5.8 4.5 L10 9.5 L14.2 4.5Z" fill="#10108a"/></svg>
<div class="t" style="left:178px;top:740.7px;font-size:13px;color:#1c1c30;letter-spacing:0.55px">EIPMasterIOTask</div>
<div style="left:165px;top:773.75px;width:11px;height:1px;background:repeating-linear-gradient(to right,#a0a0a0 0 1px,transparent 1px 2px)"></div>
<svg style="position:absolute;left:175px;top:762.25px;" width="21" height="21" viewBox="0 0 21 21"><path d="M4.3 1.5 H15 L19.5 6 V19.5 H4.3Z" fill="#fff" stroke="#606060"/><path d="M4.5 19.6 H19.6 V6" fill="none" stroke="#202020" stroke-width="1.3"/><path d="M15 1.5 V6 H19.5" fill="none" stroke="#606060"/>
<path d="M13.5 9 H18 M13.5 12 H18 M13.5 15 H18" stroke="#a8a8a8"/>
<rect x="7.5" y="4.2" width="4.8" height="5" fill="none" stroke="#b01818" stroke-width="1.5"/><rect x="7.5" y="9.2" width="4.8" height="5" fill="none" stroke="#2828b0" stroke-width="1.5"/>
<rect x="2" y="9.2" width="5.5" height="5" fill="none" stroke="#18a018" stroke-width="1.6"/></svg>
<div class="t" style="left:202.5px;top:766.75px;font-size:13px;color:#000;letter-spacing:0.4px">EtherNetIPMaster.IOCycle</div>
<div style="left:164px;top:758.5px;width:1px;height:15.25px;background:repeating-linear-gradient(to bottom,#a0a0a0 0 1px,transparent 1px 2px)"></div>
<svg style="position:absolute;left:133px;top:794.0px;" width="11" height="11" viewBox="0 0 11 11"><rect x="0.5" y="0.5" width="10" height="10" fill="#f4f4f4" stroke="#9fc8c8"/><path d="M2.5 5.5 H8.5" stroke="#202020" stroke-width="1.6"/></svg>
<div style="left:144px;top:800.0px;width:7px;height:1px;background:repeating-linear-gradient(to right,#a0a0a0 0 1px,transparent 1px 2px)"></div>
<svg style="position:absolute;left:152px;top:789.5px;" width="20" height="20" viewBox="0 0 20 20"><path d="M0.8 12 L8.5 18 L19.2 12.5" fill="none" stroke="#202020" stroke-width="1.1"/><path d="M0.8 9.5 L8.5 15.5 L19.2 10" fill="none" stroke="#202020" stroke-width="1.1"/>
<path d="M0.8 7.5 L11 2.5 L19.2 7.5 L8.5 13Z" fill="#fff" stroke="#202020" stroke-width="1.1"/>
<path d="M10 0 V6" stroke="#10108a" stroke-width="2.8"/><path d="M5.8 4.5 L10 9.5 L14.2 4.5Z" fill="#10108a"/></svg>
<div class="t" style="left:178px;top:793.2px;font-size:13px;color:#1c1c30;letter-spacing:0.55px">EIPMasterServiceTask</div>
<div style="left:165px;top:826.25px;width:11px;height:1px;background:repeating-linear-gradient(to right,#a0a0a0 0 1px,transparent 1px 2px)"></div>
<svg style="position:absolute;left:175px;top:814.75px;" width="21" height="21" viewBox="0 0 21 21"><path d="M4.3 1.5 H15 L19.5 6 V19.5 H4.3Z" fill="#fff" stroke="#606060"/><path d="M4.5 19.6 H19.6 V6" fill="none" stroke="#202020" stroke-width="1.3"/><path d="M15 1.5 V6 H19.5" fill="none" stroke="#606060"/>
<path d="M13.5 9 H18 M13.5 12 H18 M13.5 15 H18" stroke="#a8a8a8"/>
<rect x="7.5" y="4.2" width="4.8" height="5" fill="none" stroke="#b01818" stroke-width="1.5"/><rect x="7.5" y="9.2" width="4.8" height="5" fill="none" stroke="#2828b0" stroke-width="1.5"/>
<rect x="2" y="9.2" width="5.5" height="5" fill="none" stroke="#18a018" stroke-width="1.6"/></svg>
<div class="t" style="left:202.5px;top:819.25px;font-size:13px;color:#000;letter-spacing:0.4px">EtherNetIPMaster.ServiceCycle</div>
<div style="left:164px;top:811.0px;width:1px;height:15.25px;background:repeating-linear-gradient(to bottom,#a0a0a0 0 1px,transparent 1px 2px)"></div>
<svg style="position:absolute;left:133px;top:846.5px;" width="11" height="11" viewBox="0 0 11 11"><rect x="0.5" y="0.5" width="10" height="10" fill="#f4f4f4" stroke="#9fc8c8"/><path d="M2.5 5.5 H8.5" stroke="#202020" stroke-width="1.6"/></svg>
<div style="left:144px;top:852.5px;width:7px;height:1px;background:repeating-linear-gradient(to right,#a0a0a0 0 1px,transparent 1px 2px)"></div>
<svg style="position:absolute;left:152px;top:842.0px;" width="20" height="20" viewBox="0 0 20 20"><path d="M0.8 12 L8.5 18 L19.2 12.5" fill="none" stroke="#202020" stroke-width="1.1"/><path d="M0.8 9.5 L8.5 15.5 L19.2 10" fill="none" stroke="#202020" stroke-width="1.1"/>
<path d="M0.8 7.5 L11 2.5 L19.2 7.5 L8.5 13Z" fill="#fff" stroke="#202020" stroke-width="1.1"/>
<path d="M10 0 V6" stroke="#10108a" stroke-width="2.8"/><path d="M5.8 4.5 L10 9.5 L14.2 4.5Z" fill="#10108a"/></svg>
<div class="t" style="left:178px;top:845.7px;font-size:13px;color:#1c1c30;letter-spacing:0.55px">Ethercat</div>
<div style="left:165px;top:878.75px;width:11px;height:1px;background:repeating-linear-gradient(to right,#a0a0a0 0 1px,transparent 1px 2px)"></div>
<svg style="position:absolute;left:175px;top:867.25px;" width="21" height="21" viewBox="0 0 21 21"><path d="M4.3 1.5 H15 L19.5 6 V19.5 H4.3Z" fill="#fff" stroke="#606060"/><path d="M4.5 19.6 H19.6 V6" fill="none" stroke="#202020" stroke-width="1.3"/><path d="M15 1.5 V6 H19.5" fill="none" stroke="#606060"/>
<path d="M13.5 9 H18 M13.5 12 H18 M13.5 15 H18" stroke="#a8a8a8"/>
<rect x="7.5" y="4.2" width="4.8" height="5" fill="none" stroke="#b01818" stroke-width="1.5"/><rect x="7.5" y="9.2" width="4.8" height="5" fill="none" stroke="#2828b0" stroke-width="1.5"/>
<rect x="2" y="9.2" width="5.5" height="5" fill="none" stroke="#18a018" stroke-width="1.6"/></svg>
<div class="t" style="left:202.5px;top:871.75px;font-size:13px;color:#000;letter-spacing:0.4px">ETHERCAT.EtherCAT_Task</div>
<div style="left:165px;top:905.0px;width:11px;height:1px;background:repeating-linear-gradient(to right,#a0a0a0 0 1px,transparent 1px 2px)"></div>
<svg style="position:absolute;left:175px;top:893.5px;" width="21" height="21" viewBox="0 0 21 21"><path d="M4.3 1.5 H15 L19.5 6 V19.5 H4.3Z" fill="#fff" stroke="#606060"/><path d="M4.5 19.6 H19.6 V6" fill="none" stroke="#202020" stroke-width="1.3"/><path d="M15 1.5 V6 H19.5" fill="none" stroke="#606060"/>
<path d="M13.5 9 H18 M13.5 12 H18 M13.5 15 H18" stroke="#a8a8a8"/>
<rect x="7.5" y="4.2" width="4.8" height="5" fill="none" stroke="#b01818" stroke-width="1.5"/><rect x="7.5" y="9.2" width="4.8" height="5" fill="none" stroke="#2828b0" stroke-width="1.5"/>
<rect x="2" y="9.2" width="5.5" height="5" fill="none" stroke="#18a018" stroke-width="1.6"/></svg>
<div class="t" style="left:203px;top:896.8px;font-size:15px;color:#000;"><span style="font-size:15px">伺服</span></div>
<div style="left:164px;top:863.5px;width:1px;height:41.5px;background:repeating-linear-gradient(to bottom,#a0a0a0 0 1px,transparent 1px 2px)"></div>
<svg style="position:absolute;left:133px;top:925.25px;" width="11" height="11" viewBox="0 0 11 11"><rect x="0.5" y="0.5" width="10" height="10" fill="#f4f4f4" stroke="#9fc8c8"/><path d="M2.5 5.5 H8.5" stroke="#202020" stroke-width="1.6"/></svg>
<div style="left:144px;top:931.25px;width:7px;height:1px;background:repeating-linear-gradient(to right,#a0a0a0 0 1px,transparent 1px 2px)"></div>
<svg style="position:absolute;left:152px;top:920.75px;" width="20" height="20" viewBox="0 0 20 20"><path d="M0.8 12 L8.5 18 L19.2 12.5" fill="none" stroke="#202020" stroke-width="1.1"/><path d="M0.8 9.5 L8.5 15.5 L19.2 10" fill="none" stroke="#202020" stroke-width="1.1"/>
<path d="M0.8 7.5 L11 2.5 L19.2 7.5 L8.5 13Z" fill="#fff" stroke="#202020" stroke-width="1.1"/>
<path d="M10 0 V6" stroke="#10108a" stroke-width="2.8"/><path d="M5.8 4.5 L10 9.5 L14.2 4.5Z" fill="#10108a"/></svg>
<div class="t" style="left:178px;top:924.45px;font-size:13px;color:#1c1c30;letter-spacing:0.55px">MainTask</div>
<div style="left:165px;top:957.5px;width:11px;height:1px;background:repeating-linear-gradient(to right,#a0a0a0 0 1px,transparent 1px 2px)"></div>
<svg style="position:absolute;left:175px;top:946.0px;" width="21" height="21" viewBox="0 0 21 21"><path d="M4.3 1.5 H15 L19.5 6 V19.5 H4.3Z" fill="#fff" stroke="#606060"/><path d="M4.5 19.6 H19.6 V6" fill="none" stroke="#202020" stroke-width="1.3"/><path d="M15 1.5 V6 H19.5" fill="none" stroke="#606060"/>
<path d="M13.5 9 H18 M13.5 12 H18 M13.5 15 H18" stroke="#a8a8a8"/>
<rect x="7.5" y="4.2" width="4.8" height="5" fill="none" stroke="#b01818" stroke-width="1.5"/><rect x="7.5" y="9.2" width="4.8" height="5" fill="none" stroke="#2828b0" stroke-width="1.5"/>
<rect x="2" y="9.2" width="5.5" height="5" fill="none" stroke="#18a018" stroke-width="1.6"/></svg>
<div class="t" style="left:202.5px;top:950.5px;font-size:13px;color:#000;letter-spacing:0.4px">MAIN</div>
<div style="left:164px;top:942.25px;width:1px;height:15.25px;background:repeating-linear-gradient(to bottom,#a0a0a0 0 1px,transparent 1px 2px)"></div>
<div style="left:115px;top:983.75px;width:11px;height:1px;background:repeating-linear-gradient(to right,#a0a0a0 0 1px,transparent 1px 2px)"></div>
<svg style="position:absolute;left:126px;top:972.75px;" width="20" height="22" viewBox="0 0 20 22"><path d="M2 3 Q10 0 18 3 V6 H12 V17 L10 21 L8 17 V6 H2Z" fill="#303030"/><path d="M9 7 V17" stroke="#909090"/></svg>
<div class="t" style="left:152.5px;top:976.95px;font-size:13px;color:#1c1c30;letter-spacing:0.3px">PersistentVars</div>
<svg style="position:absolute;left:5px;top:997px;" width="18" height="20" viewBox="0 0 18 20"><path d="M4 3 H12 L16 7 V18 H4Z" fill="#eaf4ff" stroke="#6080b0"/><path d="M1.5 1 H9 L12 4 V15 H1.5Z" fill="#f4f8ff" stroke="#6080b0"/><path d="M4 7 H10 M4 9 H10 M4 11 H10" stroke="#90b0d0"/></svg>
<div class="t" style="left:28px;top:1001px;font-size:13.5px;color:#707070;letter-spacing:-0.5px">POUs</div>
<svg style="position:absolute;left:71px;top:998px;" width="22" height="18" viewBox="0 0 22 18"><ellipse cx="10" cy="5" rx="8" ry="3.5" fill="#b8b8b8" stroke="#606060"/><path d="M10 8 V14" stroke="#606060" stroke-width="2"/><path d="M1 15 H20" stroke="#404040" stroke-width="2.5"/><rect x="7" y="12" width="6" height="5" fill="#f0c020" stroke="#806000"/></svg>
<div class="t" style="left:97px;top:998px;font-size:15px;color:#000;"><span style="font-size:15px">设备</span></div>
<div class="t" style="left:36px;top:1030px;font-size:14px;color:#404040;"><span style="font-size:15px">组态设备检查输出</span></div>
<div style="left:8px;top:1030px;width:13px;height:3px;background:#3060c0"></div>
<div style="left:474px;top:126px;width:5px;height:900px;background:#f0f0f0"></div>
<div style="left:1458px;top:126px;width:6px;height:900px;background:#f0f0f0"></div>
<div style="left:479px;top:126px;width:979px;height:1px;background:#b0b0b0"></div>
<div style="left:479px;top:127px;width:1px;height:895px;background:#a0a0a0"></div>
<div style="left:1457px;top:127px;width:1px;height:895px;background:#a0a0a0"></div>
<div style="left:480px;top:127px;width:977px;height:27px;background:#f0f0f0"></div>
<div style="left:480px;top:153px;width:977px;height:1px;background:#a8a8a8"></div>
<svg style="position:absolute;left:484px;top:130px;" width="143" height="24" viewBox="0 0 143 24"><defs><linearGradient id="tabg" x1="0" y1="0" x2="0" y2="1"><stop offset="0" stop-color="#fdfdfd"/><stop offset="1" stop-color="#ececec"/></linearGradient></defs><path d="M0.5 23.5 L23 1.5 Q25 0.5 28 0.5 H137 Q141 0.5 141 4.5 V23.5" fill="url(#tabg)" stroke="#a8a8a8"/></svg>
<svg style="position:absolute;left:505px;top:132px;" width="21" height="21" viewBox="0 0 21 21"><defs><radialGradient id="gg" cx="0.45" cy="0.35" r="0.75"><stop offset="0" stop-color="#30b8ff"/><stop offset="0.55" stop-color="#1060e0"/><stop offset="1" stop-color="#0a2080"/></radialGradient></defs>
<circle cx="10.5" cy="10.8" r="8.6" fill="url(#gg)"/>
<path d="M3.5 7 Q6 3.5 10.5 3.2 L12 5 Q9 7 7.5 10 L4 10.5Z" fill="#48d040"/><path d="M13.5 6.5 Q18 7.5 18.5 12 L16.5 15 Q14 13 14.5 10Z" fill="#108a20"/><path d="M9.5 11.5 L12.5 13 L10.5 17Z" fill="#108a20"/>
<path d="M2.5 18.5 Q8 14 17.5 2.2" fill="none" stroke="#70d8ff" stroke-width="1.6"/><path d="M5.5 9 Q9 5 12 4" fill="none" stroke="#e8ffff" stroke-width="1.4" opacity="0.8"/>
<path d="M18.8 11 Q18 18 10.5 19.4" fill="none" stroke="#202040" stroke-width="1.1" opacity="0.7"/></svg>
<div class="t" style="left:537px;top:136px;font-size:13px;color:#000;letter-spacing:-0.35px">GVL_HMI</div>
<svg style="position:absolute;left:626px;top:130px;" width="156" height="24" viewBox="0 0 156 24"><defs><linearGradient id="tabg" x1="0" y1="0" x2="0" y2="1"><stop offset="0" stop-color="#fdfdfd"/><stop offset="1" stop-color="#ececec"/></linearGradient></defs><path d="M0.5 23.5 L11 1.5 Q13 0.5 16 0.5 H150 Q154 0.5 154 4.5 V23.5" fill="url(#tabg)" stroke="#a8a8a8"/></svg>
<svg style="position:absolute;left:632px;top:132px;" width="21" height="21" viewBox="0 0 21 21"><defs><radialGradient id="gg" cx="0.45" cy="0.35" r="0.75"><stop offset="0" stop-color="#30b8ff"/><stop offset="0.55" stop-color="#1060e0"/><stop offset="1" stop-color="#0a2080"/></radialGradient></defs>
<circle cx="10.5" cy="10.8" r="8.6" fill="url(#gg)"/>
<path d="M3.5 7 Q6 3.5 10.5 3.2 L12 5 Q9 7 7.5 10 L4 10.5Z" fill="#48d040"/><path d="M13.5 6.5 Q18 7.5 18.5 12 L16.5 15 Q14 13 14.5 10Z" fill="#108a20"/><path d="M9.5 11.5 L12.5 13 L10.5 17Z" fill="#108a20"/>
<path d="M2.5 18.5 Q8 14 17.5 2.2" fill="none" stroke="#70d8ff" stroke-width="1.6"/><path d="M5.5 9 Q9 5 12 4" fill="none" stroke="#e8ffff" stroke-width="1.4" opacity="0.8"/>
<path d="M18.8 11 Q18 18 10.5 19.4" fill="none" stroke="#202040" stroke-width="1.1" opacity="0.7"/></svg>
<div class="t" style="left:666.5px;top:136px;font-size:13px;color:#000;letter-spacing:-0.25px">GVL_Product</div>
<svg style="position:absolute;left:768px;top:130px;" width="112" height="24" viewBox="0 0 112 24"><defs><linearGradient id="tabg" x1="0" y1="0" x2="0" y2="1"><stop offset="0" stop-color="#fdfdfd"/><stop offset="1" stop-color="#ececec"/></linearGradient></defs><path d="M0.5 23.5 L22 1.5 Q24 0.5 27 0.5 H106 Q110 0.5 110 4.5 V23.5" fill="#fafafa" stroke="#a8a8a8"/></svg>
<svg style="position:absolute;left:788px;top:132px;" width="18" height="21" viewBox="0 0 18 21"><path d="M1.5 1.5 H12 L17 6.5 V19.5 H1.5Z" fill="#f4f4f4" stroke="#8a8a8a" stroke-width="1"/>
<path d="M1.5 19.5 H17 V6.5" fill="none" stroke="#202020" stroke-width="1.4"/><path d="M12 1.5 L12.5 6 L17 6.5" fill="none" stroke="#202020" stroke-width="1"/>
<rect x="5.4" y="6.4" width="2.6" height="8.2" fill="#0000ff"/><rect x="8.7" y="6.4" width="2.6" height="8.2" fill="#0000ff"/>
<path d="M2.7 10.8 H5.4 M11.3 10.8 H14" stroke="#0000ff" stroke-width="1.7"/></svg>
<div class="t" style="left:816px;top:134.5px;font-size:15px;color:#000;font-weight:bold"><span style="font-size:15px">伺服</span></div>
<svg style="position:absolute;left:861px;top:137px;" width="12" height="12" viewBox="0 0 12 12"><path d="M2 2 L10 10 M10 2 L2 10" stroke="#000" stroke-width="2.4" stroke-linecap="round"/></svg>
<svg style="position:absolute;left:1440px;top:140px;" width="12" height="6" viewBox="0 0 12 6"><path d="M0 0 H12 L6.0 6Z" fill="#000"/></svg>
<div style="left:480px;top:154px;width:946px;height:32px;background:linear-gradient(#fbfbf5,#f2f2ea 45%,#c8c8b8)"></div>
<div style="left:480px;top:186px;width:946px;height:2.5px;background:#7a7e90"></div>
<svg style="position:absolute;left:486px;top:162px;" width="20" height="18" viewBox="0 0 20 18"><rect x="0" y="0" width="9" height="9" fill="#f4e860" opacity="0.8"/><path d="M4 9 L14 5 L19 10 L10 16Z" fill="#4aa0e8"/><path d="M10 16 L19 10 V12 L10 18Z" fill="#1040a0"/></svg>
<div style="left:514px;top:164px;width:1px;height:20px;background:#c8c8b8"></div>
<svg style="position:absolute;left:523px;top:164px;" width="13" height="14" viewBox="0 0 13 14"><path d="M6.5 1 L12 7 H9 V13 H4 V7 H1Z" fill="#c0c0c0"/></svg>
<svg style="position:absolute;left:552px;top:165px;" width="13" height="14" viewBox="0 0 13 14"><path d="M6.5 13 L12 7 H9 V1 H4 V7 H1Z" fill="#3a7ae0"/></svg>
<div style="left:579px;top:164px;width:1px;height:20px;background:#c8c8b8"></div>
<svg style="position:absolute;left:586px;top:163px;" width="18" height="18" viewBox="0 0 18 18"><path d="M2 2 L16 16 M16 2 L2 16" stroke="#202020" stroke-width="1.8"/></svg>
<div style="left:615px;top:164px;width:1px;height:20px;background:#c8c8b8"></div>
<div class="t" style="left:968.6px;top:163.5px;font-size:14px;color:#000;letter-spacing:-0.05px">PROGRAM <span style="font-size:15px">伺服</span></div>
<div style="left:1426px;top:155px;width:31px;height:258px;background:linear-gradient(to right,#fbfbf6,#d3d3c3);border-left:1px solid #c8c8c8;box-sizing:border-box"></div>
<svg style="position:absolute;left:1431px;top:161px;" width="20" height="20" viewBox="0 0 20 20"><path d="M2 2 H8 M2 18 H16" stroke="#1010ff" stroke-width="1.6"/><path d="M5 6 H17 M5 9 H15 M5 12 H17" stroke="#404040" stroke-width="1.4"/><path d="M5 15 H17" stroke="#10a010" stroke-width="1.4"/></svg>
<div style="left:1429px;top:186px;width:25px;height:25px;border:1px solid #6a9ae0;background:#f4f8ff;box-sizing:border-box"></div>
<svg style="position:absolute;left:1432px;top:189px;" width="19" height="19" viewBox="0 0 19 19"><rect x="1" y="1" width="17" height="17" fill="#fff" stroke="#303030"/><path d="M1 2 H18" stroke="#1030ff" stroke-width="2.5"/><path d="M1 7 H18 M1 11.5 H18 M7 2 V18 M12.5 2 V18" stroke="#707070"/></svg>
<div style="left:481px;top:188px;width:946px;height:226px;background:#fff"></div>
<div style="left:564px;top:191px;width:1px;height:201px;background:#e4e4e4"></div>
<div style="left:646px;top:191px;width:1px;height:201px;background:#e4e4e4"></div>
<div style="left:767px;top:191px;width:1px;height:201px;background:#e4e4e4"></div>
<div style="left:830px;top:191px;width:1px;height:201px;background:#e4e4e4"></div>
<div style="left:925px;top:191px;width:1px;height:201px;background:#e4e4e4"></div>
<div style="left:988px;top:191px;width:1px;height:201px;background:#e4e4e4"></div>
<div style="left:1051px;top:191px;width:1px;height:201px;background:#e4e4e4"></div>
<div style="left:1112px;top:191px;width:1px;height:201px;background:#e4e4e4"></div>
<div style="left:1175px;top:191px;width:1px;height:201px;background:#e4e4e4"></div>
<div class="t" style="left:572px;top:197px;font-size:15px;color:#000;"><span style="font-size:15px">类别</span></div>
<div class="t" style="left:654px;top:197px;font-size:15px;color:#000;"><span style="font-size:15px">名称</span></div>
<div class="t" style="left:775px;top:197px;font-size:15px;color:#000;"><span style="font-size:15px">地址</span></div>
<div class="t" style="left:837px;top:197px;font-size:15px;color:#000;"><span style="font-size:15px">数据类型</span></div>
<div class="t" style="left:933px;top:197px;font-size:15px;color:#000;"><span style="font-size:15px">初值</span></div>
<div class="t" style="left:996px;top:197px;font-size:15px;color:#000;"><span style="font-size:15px">保持</span></div>
<div class="t" style="left:1058px;top:197px;font-size:15px;color:#000;"><span style="font-size:15px">常量</span></div>
<div class="t" style="left:1120px;top:197px;font-size:15px;color:#000;"><span style="font-size:15px">注释</span></div>
<div class="t" style="left:1183px;top:197px;font-size:15px;color:#000;"><span style="font-size:15px">特性</span></div>
<svg style="position:absolute;left:517px;top:191px;" width="14" height="8" viewBox="0 0 14 8"><path d="M1.5 7 L7 2 L12.5 7" fill="none" stroke="#404040" stroke-width="1.2"/></svg>
<div style="left:481px;top:220px;width:923px;height:172px;overflow:hidden">
<div style="left:85px;top:0.0px;width:838px;height:26px;background:#bcd8f3"></div>
<div style="left:0px;top:26.5px;width:923px;height:1px;background:#e4e4e4"></div>
<div style="left:63px;top:0.0px;width:20px;height:27px;background:#f0f0f0"></div>
<div style="left:60px;top:0.0px;width:3px;height:27px;background:#1a8a8a"></div>
<div class="t" style="right:866px;top:3.0px;font-size:13px;color:#c03040">1</div>
<svg style="position:absolute;left:94px;top:7.0px;" width="12" height="14" viewBox="0 0 12 14"><path d="M5.5 0.5 L10.8 5 V9.2 L5.5 13.5 L0.2 9.2 V5Z" fill="#505868"/><path d="M1 5.5 L5.5 9 V13 L1 9Z" fill="#a0a8b8"/><path d="M10 5.5 L5.5 9 V13 L10 9Z" fill="#383e4c"/><path d="M5.5 1.3 L10 5.2 L5.5 8.8 L1 5.2Z" fill="#3050f8" stroke="#b8c4ff" stroke-width="0.6"/></svg>
<div class="t" style="left:114.5px;top:7.2px;font-size:14px;color:#000;letter-spacing:-0.9px">VAR</div>
<div class="t nm" style="left:171px;top:5.5px;font-size:14px;color:#000;font-weight:bold;letter-spacing:0.2px">X<span style="font-size:15px">轴驱动</span>FB</div>
<div class="t" style="left:355px;top:7.2px;font-size:14px;color:#000;letter-spacing:-0.65px">Axis_FB</div>
<div style="left:530px;top:5.0px;width:16px;height:16px;border:1.3px solid #333;box-sizing:border-box;background:#fff"></div>
<div style="left:592px;top:5.0px;width:16px;height:16px;border:1.3px solid #333;box-sizing:border-box;background:#fff"></div>
<div style="left:0px;top:52.75px;width:923px;height:1px;background:#e4e4e4"></div>
<div style="left:63px;top:26.25px;width:20px;height:27px;background:#f0f0f0"></div>
<div style="left:60px;top:26.25px;width:3px;height:27px;background:#1a8a8a"></div>
<div class="t" style="right:866px;top:29.25px;font-size:13px;color:#5080c0">2</div>
<svg style="position:absolute;left:94px;top:33.25px;" width="12" height="14" viewBox="0 0 12 14"><path d="M5.5 0.5 L10.8 5 V9.2 L5.5 13.5 L0.2 9.2 V5Z" fill="#505868"/><path d="M1 5.5 L5.5 9 V13 L1 9Z" fill="#a0a8b8"/><path d="M10 5.5 L5.5 9 V13 L10 9Z" fill="#383e4c"/><path d="M5.5 1.3 L10 5.2 L5.5 8.8 L1 5.2Z" fill="#3050f8" stroke="#b8c4ff" stroke-width="0.6"/></svg>
<div class="t" style="left:114.5px;top:33.45px;font-size:14px;color:#000;letter-spacing:-0.9px">VAR</div>
<div class="t nm" style="left:171px;top:31.75px;font-size:14px;color:#000;font-weight:bold;letter-spacing:0.2px">Y<span style="font-size:15px">轴驱动</span>FB</div>
<div class="t" style="left:355px;top:33.45px;font-size:14px;color:#000;letter-spacing:-0.65px">Axis_FB</div>
<div style="left:530px;top:31.25px;width:16px;height:16px;border:1.3px solid #333;box-sizing:border-box;background:#fff"></div>
<div style="left:592px;top:31.25px;width:16px;height:16px;border:1.3px solid #333;box-sizing:border-box;background:#fff"></div>
<div style="left:0px;top:79.0px;width:923px;height:1px;background:#e4e4e4"></div>
<div style="left:63px;top:52.5px;width:20px;height:27px;background:#f0f0f0"></div>
<div style="left:60px;top:52.5px;width:3px;height:27px;background:#1a8a8a"></div>
<div class="t" style="right:866px;top:55.5px;font-size:13px;color:#5080c0">3</div>
<svg style="position:absolute;left:94px;top:59.5px;" width="12" height="14" viewBox="0 0 12 14"><path d="M5.5 0.5 L10.8 5 V9.2 L5.5 13.5 L0.2 9.2 V5Z" fill="#505868"/><path d="M1 5.5 L5.5 9 V13 L1 9Z" fill="#a0a8b8"/><path d="M10 5.5 L5.5 9 V13 L10 9Z" fill="#383e4c"/><path d="M5.5 1.3 L10 5.2 L5.5 8.8 L1 5.2Z" fill="#3050f8" stroke="#b8c4ff" stroke-width="0.6"/></svg>
<div class="t" style="left:114.5px;top:59.7px;font-size:14px;color:#000;letter-spacing:-0.9px">VAR</div>
<div class="t nm" style="left:171px;top:58.0px;font-size:14px;color:#000;font-weight:bold;letter-spacing:0.2px">Z<span style="font-size:15px">轴驱动</span>FB</div>
<div class="t" style="left:355px;top:59.7px;font-size:14px;color:#000;letter-spacing:-0.65px">Axis_FB</div>
<div style="left:530px;top:57.5px;width:16px;height:16px;border:1.3px solid #333;box-sizing:border-box;background:#fff"></div>
<div style="left:592px;top:57.5px;width:16px;height:16px;border:1.3px solid #333;box-sizing:border-box;background:#fff"></div>
<div style="left:0px;top:105.25px;width:923px;height:1px;background:#e4e4e4"></div>
<div style="left:63px;top:78.75px;width:20px;height:27px;background:#f0f0f0"></div>
<div style="left:60px;top:78.75px;width:3px;height:27px;background:#1a8a8a"></div>
<div class="t" style="right:866px;top:81.75px;font-size:13px;color:#5080c0">4</div>
<svg style="position:absolute;left:94px;top:85.75px;" width="12" height="14" viewBox="0 0 12 14"><path d="M5.5 0.5 L10.8 5 V9.2 L5.5 13.5 L0.2 9.2 V5Z" fill="#505868"/><path d="M1 5.5 L5.5 9 V13 L1 9Z" fill="#a0a8b8"/><path d="M10 5.5 L5.5 9 V13 L10 9Z" fill="#383e4c"/><path d="M5.5 1.3 L10 5.2 L5.5 8.8 L1 5.2Z" fill="#3050f8" stroke="#b8c4ff" stroke-width="0.6"/></svg>
<div class="t" style="left:114.5px;top:85.95px;font-size:14px;color:#000;letter-spacing:-0.9px">VAR</div>
<div class="t nm" style="left:171px;top:84.25px;font-size:14px;color:#000;font-weight:bold;letter-spacing:0.2px">W<span style="font-size:15px">轴驱动</span>FB</div>
<div class="t" style="left:355px;top:85.95px;font-size:14px;color:#000;letter-spacing:-0.65px">Axis_FB</div>
<div style="left:530px;top:83.75px;width:16px;height:16px;border:1.3px solid #333;box-sizing:border-box;background:#fff"></div>
<div style="left:592px;top:83.75px;width:16px;height:16px;border:1.3px solid #333;box-sizing:border-box;background:#fff"></div>
<div style="left:0px;top:131.5px;width:923px;height:1px;background:#e4e4e4"></div>
<div style="left:63px;top:105.0px;width:20px;height:27px;background:#f0f0f0"></div>
<div style="left:60px;top:105.0px;width:3px;height:27px;background:#1a8a8a"></div>
<div class="t" style="right:866px;top:108.0px;font-size:13px;color:#5080c0">5</div>
<svg style="position:absolute;left:94px;top:112.0px;" width="12" height="14" viewBox="0 0 12 14"><path d="M5.5 0.5 L10.8 5 V9.2 L5.5 13.5 L0.2 9.2 V5Z" fill="#505868"/><path d="M1 5.5 L5.5 9 V13 L1 9Z" fill="#a0a8b8"/><path d="M10 5.5 L5.5 9 V13 L10 9Z" fill="#383e4c"/><path d="M5.5 1.3 L10 5.2 L5.5 8.8 L1 5.2Z" fill="#3050f8" stroke="#b8c4ff" stroke-width="0.6"/></svg>
<div class="t" style="left:114.5px;top:112.2px;font-size:14px;color:#000;letter-spacing:-0.9px">VAR</div>
<div class="t nm" style="left:171px;top:110.5px;font-size:14px;color:#000;font-weight:bold;letter-spacing:0.2px"><span style="font-size:15px">搬运列号</span></div>
<div class="t" style="left:355px;top:112.2px;font-size:14px;color:#000;letter-spacing:-0.65px">DINT</div>
<div style="left:530px;top:110.0px;width:16px;height:16px;border:1.3px solid #333;box-sizing:border-box;background:#fff"></div>
<div style="left:592px;top:110.0px;width:16px;height:16px;border:1.3px solid #333;box-sizing:border-box;background:#fff"></div>
<div style="left:0px;top:157.75px;width:923px;height:1px;background:#e4e4e4"></div>
<div style="left:63px;top:131.25px;width:20px;height:27px;background:#f0f0f0"></div>
<div style="left:60px;top:131.25px;width:3px;height:27px;background:#1a8a8a"></div>
<div class="t" style="right:866px;top:134.25px;font-size:13px;color:#5080c0">6</div>
<svg style="position:absolute;left:94px;top:138.25px;" width="12" height="14" viewBox="0 0 12 14"><path d="M5.5 0.5 L10.8 5 V9.2 L5.5 13.5 L0.2 9.2 V5Z" fill="#505868"/><path d="M1 5.5 L5.5 9 V13 L1 9Z" fill="#a0a8b8"/><path d="M10 5.5 L5.5 9 V13 L10 9Z" fill="#383e4c"/><path d="M5.5 1.3 L10 5.2 L5.5 8.8 L1 5.2Z" fill="#3050f8" stroke="#b8c4ff" stroke-width="0.6"/></svg>
<div class="t" style="left:114.5px;top:138.45px;font-size:14px;color:#000;letter-spacing:-0.9px">VAR</div>
<div class="t nm" style="left:171px;top:136.75px;font-size:14px;color:#000;font-weight:bold;letter-spacing:0.2px"><span style="font-size:15px">搬运行号</span></div>
<div class="t" style="left:355px;top:138.45px;font-size:14px;color:#000;letter-spacing:-0.65px">DINT</div>
<div style="left:530px;top:136.25px;width:16px;height:16px;border:1.3px solid #333;box-sizing:border-box;background:#fff"></div>
<div style="left:592px;top:136.25px;width:16px;height:16px;border:1.3px solid #333;box-sizing:border-box;background:#fff"></div>
<div style="left:0px;top:184.0px;width:923px;height:1px;background:#e4e4e4"></div>
<div style="left:63px;top:157.5px;width:20px;height:27px;background:#f0f0f0"></div>
<div style="left:60px;top:157.5px;width:3px;height:27px;background:#1a8a8a"></div>
<div class="t" style="right:866px;top:160.5px;font-size:13px;color:#5080c0">7</div>
<svg style="position:absolute;left:94px;top:164.5px;" width="12" height="14" viewBox="0 0 12 14"><path d="M5.5 0.5 L10.8 5 V9.2 L5.5 13.5 L0.2 9.2 V5Z" fill="#505868"/><path d="M1 5.5 L5.5 9 V13 L1 9Z" fill="#a0a8b8"/><path d="M10 5.5 L5.5 9 V13 L10 9Z" fill="#383e4c"/><path d="M5.5 1.3 L10 5.2 L5.5 8.8 L1 5.2Z" fill="#3050f8" stroke="#b8c4ff" stroke-width="0.6"/></svg>
<div class="t" style="left:114.5px;top:164.7px;font-size:14px;color:#000;letter-spacing:-0.9px">VAR</div>
<div class="t nm" style="left:171px;top:163.0px;font-size:14px;color:#000;font-weight:bold;letter-spacing:0.2px"><span style="font-size:15px">搬运次序偶</span></div>
<div class="t" style="left:355px;top:164.7px;font-size:14px;color:#000;letter-spacing:-0.65px">DINT</div>
<div style="left:530px;top:162.5px;width:16px;height:16px;border:1.3px solid #333;box-sizing:border-box;background:#fff"></div>
<div style="left:592px;top:162.5px;width:16px;height:16px;border:1.3px solid #333;box-sizing:border-box;background:#fff"></div>
<div style="left:165px;top:0;width:122px;height:27px;border:1.5px solid #3a88e0;box-sizing:border-box"></div>
</div>
<div style="left:1404px;top:189px;width:22px;height:203px;background:#f0f0f0"></div>
<div style="left:1406px;top:212px;width:17px;height:63px;background:#cdcdcd"></div>
<svg style="position:absolute;left:1408px;top:196px;" width="14" height="10" viewBox="0 0 14 10"><path d="M2 8 L7 3 L12 8" fill="none" stroke="#505050" stroke-width="1.6"/></svg>
<svg style="position:absolute;left:1408px;top:375px;" width="14" height="10" viewBox="0 0 14 10"><path d="M2 2 L7 7 L12 2" fill="none" stroke="#505050" stroke-width="1.6"/></svg>
<div style="left:481px;top:392px;width:945px;height:20px;background:#f0f0f0"></div>
<div style="left:504px;top:393px;width:495px;height:18px;background:#cdcdcd"></div>
<svg style="position:absolute;left:486px;top:396px;" width="10" height="13" viewBox="0 0 10 13"><path d="M8 2 L3 6.5 L8 11" fill="none" stroke="#505050" stroke-width="1.8"/></svg>
<svg style="position:absolute;left:1388px;top:396px;" width="10" height="13" viewBox="0 0 10 13"><path d="M2 2 L7 6.5 L2 11" fill="none" stroke="#505050" stroke-width="1.8"/></svg>
<div style="left:480px;top:414px;width:977px;height:2px;background:#7a7e8c"></div>
<div style="left:480px;top:415px;width:977px;height:6px;background:#f0f0f0"></div>
<div style="left:480px;top:421px;width:977px;height:1.8px;background:#b4b4b4"></div>
<svg style="position:absolute;left:954px;top:415.5px;" width="11" height="7" viewBox="0 0 11 7"><path d="M0.5 6.5 L5.5 0.5 L10.5 6.5Z" fill="#909090"/></svg>
<svg style="position:absolute;left:974px;top:415.5px;" width="11" height="7" viewBox="0 0 11 7"><path d="M0.5 0.5 L5.5 6.5 L10.5 0.5Z" fill="#888888"/></svg>
<div style="left:480px;top:423px;width:957px;height:579.5px;background:#fff"></div>
<div style="left:537px;top:423px;width:3px;height:579.5px;background:#0a8a8a"></div>
<div style="left:541px;top:423px;width:19px;height:579.5px;background:#f4f4f4"></div>
<div style="left:578px;top:423px;width:2px;height:579.5px;background:#000"></div>
<div class="t" style="left:587px;top:423px;font-size:15px;color:#008b8b;letter-spacing:0.3px">*X<span style="font-size:15px">轴驱动</span>*</div>
<div class="t" style="left:840px;top:450.5px;font-size:15px;color:#000;letter-spacing:-0.3px">X<span style="font-size:15px">轴驱动</span>FB</div>
<div style="left:795px;top:472px;width:164px;height:540px;background:#e3eaf6;border:1.5px solid #4d6c99;box-sizing:border-box"></div>
<div class="t " style="left:796px;width:162px;text-align:center;top:477.5px;font-size:15px;color:#000;font-weight:bold">Axis_FB</div>
<div style="left:580px;top:509px;width:215px;height:2px;background:#404040"></div>
<div style="left:959px;top:509px;width:196px;height:2px;background:#404040"></div>
<div class="t" style="left:803px;top:499.5px;font-size:15px;color:#000;">EN</div>
<div class="t " style="right:852px;top:499.5px;font-size:15px;color:#000;">ENO</div>
<div style="left:656px;top:523px;width:113px;height:21px;background:#d3d3d3"></div>
<div style="left:769px;top:547px;width:26px;height:2px;background:#404040"></div>
<div style="left:769px;top:568px;width:26px;height:2px;background:#404040"></div>
<div style="left:656px;top:581.8px;width:113px;height:21px;background:#d3d3d3"></div>
<div style="left:769px;top:606px;width:26px;height:2px;background:#404040"></div>
<div style="left:769px;top:622px;width:26px;height:2px;background:#404040"></div>
<div style="left:769px;top:638px;width:26px;height:2px;background:#404040"></div>
<div style="left:652.6px;top:651.9px;width:116.39999999999998px;height:21px;background:#d3d3d3"></div>
<div style="left:769px;top:676px;width:26px;height:2px;background:#404040"></div>
<div style="left:655.3px;top:689.2px;width:113.70000000000005px;height:21px;background:#d3d3d3"></div>
<div style="left:769px;top:713px;width:26px;height:2px;background:#404040"></div>
<div style="left:656.4px;top:726.7px;width:112.60000000000002px;height:21px;background:#d3d3d3"></div>
<div style="left:769px;top:751px;width:26px;height:2px;background:#404040"></div>
<div style="left:595px;top:764px;width:174px;height:21px;background:#d3d3d3"></div>
<div style="left:769px;top:788px;width:26px;height:2px;background:#404040"></div>
<div style="left:627.5px;top:801.6px;width:141.5px;height:21px;background:#d3d3d3"></div>
<div style="left:769px;top:826px;width:26px;height:2px;background:#404040"></div>
<div style="left:634.8px;top:839px;width:134.20000000000005px;height:21px;background:#d3d3d3"></div>
<div style="left:769px;top:863px;width:26px;height:2px;background:#404040"></div>
<div style="left:769px;top:879px;width:26px;height:2px;background:#404040"></div>
<div style="left:769px;top:896px;width:26px;height:2px;background:#404040"></div>
<div style="left:769px;top:912px;width:26px;height:2px;background:#404040"></div>
<div style="left:769px;top:928px;width:26px;height:2px;background:#404040"></div>
<div style="left:769px;top:949px;width:26px;height:2px;background:#404040"></div>
<div style="left:769px;top:971px;width:26px;height:2px;background:#404040"></div>
<div style="left:638.4px;top:984px;width:130.60000000000002px;height:21px;background:#d3d3d3"></div>
<div style="left:971px;top:522.4px;width:150px;height:21px;background:#d3d3d3"></div>
<div style="left:959px;top:546px;width:13px;height:2px;background:#404040"></div>
<div style="left:959px;top:563px;width:13px;height:2px;background:#404040"></div>
<div style="left:959px;top:579px;width:13px;height:2px;background:#404040"></div>
<div style="left:971px;top:593.4px;width:176.5px;height:21px;background:#d3d3d3"></div>
<div style="left:959px;top:617px;width:13px;height:2px;background:#404040"></div>
<div style="left:971px;top:630.5px;width:173px;height:21px;background:#d3d3d3"></div>
<div style="left:959px;top:655px;width:13px;height:2px;background:#404040"></div>
<div style="left:971px;top:668.2px;width:114px;height:21px;background:#d3d3d3"></div>
<div style="left:959px;top:692px;width:13px;height:2px;background:#404040"></div>
<div style="left:971px;top:705.8px;width:120px;height:21px;background:#d3d3d3"></div>
<div style="left:959px;top:730px;width:13px;height:2px;background:#404040"></div>
<div style="left:971px;top:743px;width:113px;height:21px;background:#d3d3d3"></div>
<div style="left:959px;top:767px;width:13px;height:2px;background:#404040"></div>
<div style="left:971px;top:780.9px;width:113px;height:21px;background:#d3d3d3"></div>
<div style="left:959px;top:805px;width:13px;height:2px;background:#404040"></div>
<div style="left:959px;top:821px;width:13px;height:2px;background:#404040"></div>
<div style="left:959px;top:837px;width:13px;height:2px;background:#404040"></div>
<div class="t ls0" style="left:656px;width:113px;text-align:center;top:525px;font-size:15px;color:#008b8b;letter-spacing:-0.5px"><span style="font-size:15px">输入</span></div>
<div class="t ls0" style="right:1042px;top:543.8px;font-size:15px;color:#800080;letter-spacing:-0.5px">I00_<span style="font-size:15px">急停按钮</span></div>
<div class="t ls0" style="left:803px;top:539px;font-size:15px;color:#000;letter-spacing:-0.5px"><span style="font-size:15px">急停</span></div>
<div class="t ls0" style="right:1042px;top:564.8px;font-size:15px;color:#000;letter-spacing:-0.5px">XYW<span style="font-size:15px">轴停止</span></div>
<div class="t ls0" style="left:803px;top:560px;font-size:15px;color:#000;letter-spacing:-0.5px"><span style="font-size:15px">停止</span></div>
<div class="t ls0" style="left:656px;width:113px;text-align:center;top:583.8px;font-size:15px;color:#008b8b;letter-spacing:-0.5px"><span style="font-size:15px">输入</span></div>
<div class="t ls0" style="right:1042px;top:602.5999999999999px;font-size:15px;color:#800080;letter-spacing:-0.5px">I00_<span style="font-size:15px">手自动</span></div>
<div class="t ls0" style="left:803px;top:597.8px;font-size:15px;color:#000;letter-spacing:-0.5px"><span style="font-size:15px">手自动</span></div>
<div class="t ls0" style="right:1042px;top:619.0px;font-size:15px;color:#800080;letter-spacing:-0.5px">Z<span style="font-size:15px">轴在初始位</span></div>
<div class="t ls0" style="left:803px;top:614.2px;font-size:15px;color:#000;letter-spacing:-0.5px"><span style="font-size:15px">轴安全条件</span></div>
<div class="t ls0" style="right:1042px;top:635.1999999999999px;font-size:15px;color:#800080;letter-spacing:-0.5px">X<span style="font-size:15px">轴报警清除</span></div>
<div class="t ls0" style="left:803px;top:630.4px;font-size:15px;color:#000;letter-spacing:-0.5px"><span style="font-size:15px">轴报警复位</span></div>
<div class="t ls0" style="left:652.6px;width:116.39999999999998px;text-align:center;top:653.9px;font-size:15px;color:#008b8b;letter-spacing:-0.5px">X<span style="font-size:15px">轴使能</span></div>
<div class="t ls0" style="right:1042px;top:672.6999999999999px;font-size:15px;color:#800080;letter-spacing:-0.5px">Xaxis_enabled</div>
<div class="t ls0" style="left:803px;top:667.9px;font-size:15px;color:#000;letter-spacing:-0.5px"><span style="font-size:15px">使能开关</span></div>
<div class="t ls0" style="left:655.3px;width:113.70000000000005px;text-align:center;top:691.2px;font-size:15px;color:#008b8b;letter-spacing:-0.5px">X<span style="font-size:15px">轴位置加</span></div>
<div class="t ls0" style="right:1042px;top:710.0px;font-size:15px;color:#800080;letter-spacing:-0.5px">Xaxis_forward</div>
<div class="t ls0" style="left:803px;top:705.2px;font-size:15px;color:#000;letter-spacing:-0.5px"><span style="font-size:15px">手动正转</span></div>
<div class="t ls0" style="left:656.4px;width:112.60000000000002px;text-align:center;top:728.7px;font-size:15px;color:#008b8b;letter-spacing:-0.5px">X<span style="font-size:15px">轴位置减</span></div>
<div class="t ls0" style="right:1042px;top:747.5px;font-size:15px;color:#800080;letter-spacing:-0.5px">Xaxis_back</div>
<div class="t ls0" style="left:803px;top:742.7px;font-size:15px;color:#000;letter-spacing:-0.5px"><span style="font-size:15px">手动反转</span></div>
<div class="t ls0" style="left:595px;width:174px;text-align:center;top:766px;font-size:15px;color:#008b8b;letter-spacing:-0.5px">X<span style="font-size:15px">轴速度选择</span></div>
<div class="t ls0" style="right:1042px;top:784.8px;font-size:15px;color:#800080;letter-spacing:-0.5px">Xaxis_speed_selection</div>
<div class="t ls0" style="left:803px;top:780px;font-size:15px;color:#000;letter-spacing:-0.5px"><span style="font-size:15px">速度选择</span></div>
<div class="t ls0" style="left:627.5px;width:141.5px;text-align:center;top:803.6px;font-size:15px;color:#008b8b;letter-spacing:-0.5px">X<span style="font-size:15px">轴手动高速</span></div>
<div class="t ls0" style="right:1042px;top:822.4px;font-size:15px;color:#800080;letter-spacing:-0.5px">Xaxis_high_speed</div>
<div class="t ls0" style="left:803px;top:817.6px;font-size:15px;color:#000;letter-spacing:-0.5px"><span style="font-size:15px">手动高速</span></div>
<div class="t ls0" style="left:634.8px;width:134.20000000000005px;text-align:center;top:841px;font-size:15px;color:#008b8b;letter-spacing:-0.5px">X<span style="font-size:15px">轴手动低速</span></div>
<div class="t ls0" style="right:1042px;top:859.8px;font-size:15px;color:#800080;letter-spacing:-0.5px">Xaxis_low_speed</div>
<div class="t ls0" style="left:803px;top:855px;font-size:15px;color:#000;letter-spacing:-0.5px"><span style="font-size:15px">手动低速</span></div>
<div class="t ls0" style="right:1042px;top:876.0999999999999px;font-size:15px;color:#800080;letter-spacing:-0.5px">X<span style="font-size:15px">轴回原开始</span></div>
<div class="t ls0" style="left:803px;top:871.3px;font-size:15px;color:#000;letter-spacing:-0.5px"><span style="font-size:15px">回原启动</span></div>
<div class="t ls0" style="right:1042px;top:892.5999999999999px;font-size:15px;color:#800080;letter-spacing:-0.5px">X<span style="font-size:15px">轴定位开始</span></div>
<div class="t ls0" style="left:803px;top:887.8px;font-size:15px;color:#000;letter-spacing:-0.5px"><span style="font-size:15px">定位启动</span></div>
<div class="t ls0" style="right:1042px;top:908.8px;font-size:15px;color:#800080;letter-spacing:-0.5px">X<span style="font-size:15px">轴定位速度</span></div>
<div class="t ls0" style="left:803px;top:904px;font-size:15px;color:#000;letter-spacing:-0.5px"><span style="font-size:15px">定位速度</span></div>
<div class="t ls0" style="right:1042px;top:925.1999999999999px;font-size:15px;color:#800080;letter-spacing:-0.5px">X<span style="font-size:15px">轴定位坐标</span></div>
<div class="t ls0" style="left:803px;top:920.4px;font-size:15px;color:#000;letter-spacing:-0.5px"><span style="font-size:15px">定位位置</span></div>
<div class="t ls0" style="right:1042px;top:943.9px;font-size:15px;color:#000;letter-spacing:-0.5px">500</div>
<div class="t ls0" style="left:803px;top:941.5px;font-size:15px;color:#000;letter-spacing:-0.5px"><span style="font-size:15px">加速度</span></div>
<div class="t ls0" style="right:1042px;top:965.1999999999999px;font-size:15px;color:#000;letter-spacing:-0.5px">500</div>
<div class="t ls0" style="left:803px;top:962.8px;font-size:15px;color:#000;letter-spacing:-0.5px"><span style="font-size:15px">减速度</span></div>
<div class="t ls0" style="left:638.4px;width:130.60000000000002px;text-align:center;top:986px;font-size:15px;color:#008b8b;letter-spacing:-0.5px">Parameter</div>
<div class="t ls0" style="left:971px;width:150px;text-align:center;top:524.4px;font-size:15px;color:#008b8b;letter-spacing:-0.5px">X<span style="font-size:15px">轴使能灯</span></div>
<div class="t ls0" style="left:978px;top:544.1px;font-size:15px;color:#800080;letter-spacing:-0.5px">Xaxis_enable_lamp</div>
<div class="t ls0" style="right:856.5px;top:538.4px;font-size:15px;color:#000;letter-spacing:-0.5px"><span style="font-size:15px">使能完成</span></div>
<div class="t ls0" style="left:978px;top:561.0px;font-size:15px;color:#800080;letter-spacing:-0.5px">X<span style="font-size:15px">轴回原完成</span></div>
<div class="t ls0" style="right:856.5px;top:555.3px;font-size:15px;color:#000;letter-spacing:-0.5px"><span style="font-size:15px">回原完成</span></div>
<div class="t ls0" style="left:978px;top:577.2px;font-size:15px;color:#800080;letter-spacing:-0.5px">X<span style="font-size:15px">轴定位完成</span></div>
<div class="t ls0" style="right:856.5px;top:571.5px;font-size:15px;color:#000;letter-spacing:-0.5px"><span style="font-size:15px">定位完成</span></div>
<div class="t ls0" style="left:971px;width:176.5px;text-align:center;top:595.4px;font-size:15px;color:#008b8b;letter-spacing:-0.5px">X<span style="font-size:15px">轴当前坐标</span></div>
<div class="t ls0" style="left:978px;top:615.1px;font-size:15px;color:#800080;letter-spacing:-0.5px">Xaxis_current_position</div>
<div class="t ls0" style="right:856.5px;top:609.4px;font-size:15px;color:#000;letter-spacing:-0.5px"><span style="font-size:15px">当前位置</span></div>
<div class="t ls0" style="left:971px;width:173px;text-align:center;top:632.5px;font-size:15px;color:#008b8b;letter-spacing:-0.5px">X<span style="font-size:15px">轴当前速度</span></div>
<div class="t ls0" style="left:978px;top:652.2px;font-size:15px;color:#800080;letter-spacing:-0.5px">Xaxis_current_velocity</div>
<div class="t ls0" style="right:856.5px;top:646.5px;font-size:15px;color:#000;letter-spacing:-0.5px"><span style="font-size:15px">当前速度</span></div>
<div class="t ls0" style="left:971px;width:114px;text-align:center;top:670.2px;font-size:15px;color:#008b8b;letter-spacing:-0.5px">X<span style="font-size:15px">轴正极限</span></div>
<div class="t ls0" style="left:978px;top:689.9000000000001px;font-size:15px;color:#800080;letter-spacing:-0.5px">Xaxis_positive</div>
<div class="t ls0" style="right:856.5px;top:684.2px;font-size:15px;color:#000;letter-spacing:-0.5px"><span style="font-size:15px">正极限位</span></div>
<div class="t ls0" style="left:971px;width:120px;text-align:center;top:707.8px;font-size:15px;color:#008b8b;letter-spacing:-0.5px">X<span style="font-size:15px">轴负极限</span></div>
<div class="t ls0" style="left:978px;top:727.5px;font-size:15px;color:#800080;letter-spacing:-0.5px">Xaxis_negative</div>
<div class="t ls0" style="right:856.5px;top:721.8px;font-size:15px;color:#000;letter-spacing:-0.5px"><span style="font-size:15px">负极限位</span></div>
<div class="t ls0" style="left:971px;width:113px;text-align:center;top:745px;font-size:15px;color:#008b8b;letter-spacing:-0.5px">X<span style="font-size:15px">轴原点</span></div>
<div class="t ls0" style="left:978px;top:764.7px;font-size:15px;color:#800080;letter-spacing:-0.5px">Xaxis_origin</div>
<div class="t ls0" style="right:856.5px;top:759px;font-size:15px;color:#000;letter-spacing:-0.5px"><span style="font-size:15px">原点限位</span></div>
<div class="t ls0" style="left:971px;width:113px;text-align:center;top:782.9px;font-size:15px;color:#008b8b;letter-spacing:-0.5px">X<span style="font-size:15px">轴报警</span></div>
<div class="t ls0" style="left:978px;top:802.6px;font-size:15px;color:#800080;letter-spacing:-0.5px">Xaxis_alarm</div>
<div class="t ls0" style="right:856.5px;top:796.9px;font-size:15px;color:#000;letter-spacing:-0.5px"><span style="font-size:15px">轴报警</span></div>
<div class="t ls0" style="left:978px;top:818.4000000000001px;font-size:15px;color:#800080;letter-spacing:-0.5px">X<span style="font-size:15px">轴报警号</span></div>
<div class="t ls0" style="right:856.5px;top:812.7px;font-size:15px;color:#000;letter-spacing:-0.5px"><span style="font-size:15px">报警号</span></div>
<div class="t ls0" style="left:978px;top:834.4000000000001px;font-size:15px;color:#800080;letter-spacing:-0.5px">X<span style="font-size:15px">轴忙</span></div>
<div class="t ls0" style="right:856.5px;top:828.7px;font-size:15px;color:#000;letter-spacing:-0.5px"><span style="font-size:15px">轴忙中</span></div>
<div style="left:1437px;top:423px;width:20px;height:579.5px;background:#f0f0f0"></div>
<div style="left:1438px;top:681px;width:18px;height:27px;background:#cdcdcd"></div>
<svg style="position:absolute;left:1440px;top:428px;" width="14" height="10" viewBox="0 0 14 10"><path d="M2 8 L7 3 L12 8" fill="none" stroke="#505050" stroke-width="1.6"/></svg>
<svg style="position:absolute;left:1440px;top:985px;" width="14" height="10" viewBox="0 0 14 10"><path d="M2 2 L7 7 L12 2" fill="none" stroke="#505050" stroke-width="1.6"/></svg>
<div style="left:480px;top:1002.5px;width:977px;height:19px;background:#f0f0f0"></div>
<div style="left:501.5px;top:1003.5px;width:589px;height:17px;background:#cdcdcd"></div>
<svg style="position:absolute;left:485px;top:1006px;" width="10" height="13" viewBox="0 0 10 13"><path d="M8 2 L3 6.5 L8 11" fill="none" stroke="#505050" stroke-width="1.8"/></svg>
<svg style="position:absolute;left:1420px;top:1006px;" width="10" height="13" viewBox="0 0 10 13"><path d="M2 2 L7 6.5 L2 11" fill="none" stroke="#505050" stroke-width="1.8"/></svg>
<div style="left:479px;top:1021.5px;width:979px;height:1.5px;background:#a0a0a0"></div>
<div style="left:474px;top:1023px;width:990px;height:10px;background:#f0f0f0"></div>
<div style="left:1255.5px;top:976.5px;width:25px;height:24.5px;background:#fff;border:1.2px solid #a8a8a8;box-sizing:border-box"></div>
<div style="left:1280.5px;top:976.5px;width:25px;height:24.5px;background:#f0f0f0;border:1.2px solid #a8a8a8;box-sizing:border-box"></div>
<div style="left:1305.5px;top:976.5px;width:25px;height:24.5px;background:#f0f0f0;border:1.2px solid #a8a8a8;box-sizing:border-box"></div>
<svg style="position:absolute;left:1260px;top:980px;" width="16" height="18" viewBox="0 0 16 18"><path d="M3 1 V15 L6.5 11.5 L9.5 17 L11.5 16 L8.5 10.5 H13Z" fill="#000"/></svg>
<svg style="position:absolute;left:1284px;top:980px;" width="18" height="18" viewBox="0 0 18 18"><path d="M9 1 V17 M1 9 H17" stroke="#000" stroke-width="1.3"/><path d="M9 0 L7 3 H11Z M9 18 L7 15 H11Z M0 9 L3 7 V11Z M18 9 L15 7 V11Z" fill="#000"/></svg>
<svg style="position:absolute;left:1309px;top:980px;" width="18" height="18" viewBox="0 0 18 18"><circle cx="7" cy="7" r="5" fill="#cfe6ff" stroke="#6080a0" stroke-width="1.5"/><path d="M10.5 10.5 L16 16" stroke="#c09020" stroke-width="3"/></svg>
<div style="left:1355.5px;top:976.5px;width:55px;height:24.5px;background:#f0f0f0;border:1.2px solid #a8a8a8;box-sizing:border-box"></div>
<div class="t" style="left:1363px;top:983px;font-size:14px;color:#000;">100 %</div>
<div style="left:1410.5px;top:976.5px;width:25px;height:24.5px;background:#f0f0f0;border:1.2px solid #a8a8a8;box-sizing:border-box"></div>
<svg style="position:absolute;left:1414px;top:980px;" width="20" height="18" viewBox="0 0 20 18"><path d="M2 3 H10 V16 H2Z" fill="#fff" stroke="#000"/><circle cx="11" cy="8" r="5" fill="#d0f0f0" stroke="#000" stroke-width="1.5"/><path d="M14 11 L19 17" stroke="#000" stroke-width="2.5"/></svg>
<svg style="position:absolute;left:1440px;top:985px;" width="14" height="10" viewBox="0 0 14 10"><path d="M2 2 L7 7 L12 2" fill="none" stroke="#505050" stroke-width="1.6"/></svg>
<div style="left:1464px;top:126px;width:340px;height:907px;background:#f0f0f0"></div>
<div style="left:1464px;top:126px;width:340px;height:1px;background:#a8a8a8"></div>
<div style="left:1464px;top:127px;width:340px;height:28px;background:#bfcddb"></div>
<div style="left:1464px;top:127px;width:1px;height:28px;background:#a0a0a0"></div>
<div class="t" style="left:1471px;top:134.4px;font-size:15px;color:#000;"><span style="font-size:15px">工具箱</span></div>
<svg style="position:absolute;left:1757px;top:140px;" width="11" height="6" viewBox="0 0 11 6"><path d="M0 0 H11 L5.5 6Z" fill="#000"/></svg>
<svg style="position:absolute;left:1785px;top:135px;" width="10" height="14" viewBox="0 0 10 14"><path d="M2.5 1 H7.5 V7 H9 V9 H1 V7 H2.5Z" fill="#000"/><path d="M5 9 V13.5" stroke="#000" stroke-width="1.5"/><path d="M4 2 V7" stroke="#bfcddb" stroke-width="1"/></svg>
<div style="left:1464px;top:155px;width:340px;height:29px;background:#f0f0f0"></div>
<div style="left:1464px;top:184px;width:340px;height:2px;background:#fafafa"></div>
<div style="left:1464px;top:155.5px;width:150px;height:27.5px;background:#fff;border:1px solid #a0a0a0;box-sizing:border-box"></div>
<div class="t" style="left:1468px;top:160px;font-size:15px;color:#000;letter-spacing:-0.3px"><span style="font-size:15px">搜索</span>...</div>
<svg style="position:absolute;left:1597px;top:164px;" width="14" height="9" viewBox="0 0 14 9"><path d="M1.5 1.5 L7 7 L12.5 1.5" fill="none" stroke="#404040" stroke-width="1.3"/></svg>
<svg style="position:absolute;left:1617px;top:162px;" width="19" height="16" viewBox="0 0 19 16"><path d="M1 3 H7 L8.5 1 H13 V3 H18 V15 H1Z" fill="#d8d8d8" stroke="#a8a8a8"/></svg>
<svg style="position:absolute;left:1645px;top:162px;" width="20" height="16" viewBox="0 0 20 16"><rect x="4" y="1" width="12" height="14" fill="#c8c8c8" stroke="#909090"/><path d="M0 5 H4 M0 11 H4 M16 5 H20" stroke="#909090" stroke-width="1.5"/><path d="M10 3 V8 M7.5 5.5 H12.5" stroke="#909090"/></svg>
<svg style="position:absolute;left:1677px;top:163px;" width="13" height="14" viewBox="0 0 13 14"><path d="M6.5 1 L12 7 H9 V13 H4 V7 H1Z" fill="#c0c0c0"/></svg>
<svg style="position:absolute;left:1706px;top:164px;" width="13" height="14" viewBox="0 0 13 14"><path d="M6.5 13 L12 7 H9 V1 H4 V7 H1Z" fill="#b8b8b8"/></svg>
<div style="left:1736px;top:169px;width:12px;height:3px;background:#a0a0a0"></div>
<svg style="position:absolute;left:1761px;top:159px;" width="22" height="22" viewBox="0 0 22 22"><path d="M2 6 H10 L13 9 V20 H2Z" fill="#fff" stroke="#303030"/><path d="M4 12 H11 M4 14.5 H11 M4 17 H11" stroke="#303030"/><path d="M12 4 Q16 0 20 4" fill="none" stroke="#303030" stroke-width="1.3"/><path d="M20 2 V6 H16" fill="none" stroke="#303030"/></svg>
<svg style="position:absolute;left:1789px;top:159px;" width="15" height="22" viewBox="0 0 15 22"><path d="M2 6 H10 L13 9 V20 H2Z" fill="#fff" stroke="#303030"/><path d="M4 12 H11 M4 14.5 H11 M4 17 H11" stroke="#303030"/><path d="M12 2 L15 5" stroke="#303030" stroke-width="1.5"/></svg>
<div style="left:1465px;top:189px;width:338px;height:24px;background:#e1e1e1;border:1px solid #c0c0c0;box-sizing:border-box"></div>
<svg style="position:absolute;left:1474px;top:193px;" width="10" height="17" viewBox="0 0 10 17"><path d="M1 1 L9.5 8.5 L1 16Z" fill="#606060"/></svg>
<div class="t acc" style="left:1490px;top:194px;font-size:14px;color:#000;font-weight:bold;"><span style="font-size:15px">收藏夹</span></div>
<div style="left:1465px;top:216.5px;width:338px;height:24px;background:#e1e1e1;border:1px solid #c0c0c0;box-sizing:border-box"></div>
<svg style="position:absolute;left:1468px;top:222.5px;" width="15" height="15" viewBox="0 0 15 15"><path d="M14 1 V14 H1Z" fill="#606060"/></svg>
<div class="t acc" style="left:1490px;top:221.5px;font-size:14px;color:#000;font-weight:bold;"><span style="font-size:15px">基本指令</span></div>
<div style="left:1464px;top:242px;width:339px;height:589px;background:#fff;border:1px solid #a8a8a8;border-right:none;border-top:1px solid #c8c8c8;box-sizing:border-box"></div>
<div style="left:1685px;top:245.0px;width:117px;height:26px;background:#d9d9d9"></div>
<div style="left:1491.5px;top:245.0px;width:194px;height:26px;background:#f0f0f0;border:1.5px solid #3a88e0;box-sizing:border-box"></div>
<svg style="position:absolute;left:1473px;top:252.0px;" width="11" height="11" viewBox="0 0 11 11"><rect x="0.5" y="0.5" width="10" height="10" fill="#f4f4f4" stroke="#9fc8c8"/><path d="M2.5 5.5 H8.5" stroke="#202020" stroke-width="1.6"/></svg>
<svg style="position:absolute;left:1492px;top:250.0px;" width="19" height="16" viewBox="0 0 19 16"><defs><linearGradient id="fg" x1="0" y1="0" x2="0" y2="1"><stop offset="0" stop-color="#fff2b0"/><stop offset="1" stop-color="#d9a020"/></linearGradient></defs>
<path d="M1 3 H7 L8.5 1 H12 V3 H17.5 V15 H1Z" fill="#e8c560" stroke="#a07820" stroke-width="0.8"/><path d="M1 6 H17.5 V15 H1Z" fill="url(#fg)" stroke="#a07820" stroke-width="0.8"/></svg>
<div class="t" style="left:1519px;top:249.0px;font-size:15px;color:#000;"><span style="font-size:15px">梯形图元素</span></div>
<div style="left:1516px;top:271.25px;width:169px;height:210.0px;background:#f0f0f0"></div>
<svg style="position:absolute;left:1516px;top:273.25px;" width="20" height="21" viewBox="0 0 20 21"><path d="M1.5 3 V19 M1.5 3.5 H20 M1.5 18.5 H20" stroke="#1818ff" stroke-width="1.6" fill="none"/><path d="M7 8 V18.5" stroke="#1818ff" stroke-width="2.2"/><path d="M4 4 L10 10 M10 4 L4 10 M7 3 V11 M3 7 H11" stroke="#f0e040" stroke-width="1.2"/><path d="M12 7 H19 M12 10 H19" stroke="#8888ff" stroke-dasharray="1 1"/></svg>
<div class="t" style="left:1543.5px;top:276.75px;font-size:14px;color:#000;"><span style="font-size:15px">网络</span></div>
<div style="left:1686px;top:271.25px;width:116px;height:26px;overflow:hidden">
<div class="t" style="left:0.5px;top:5.5px;font-size:14px;color:#000"><span style="font-size:15px">插入空的网络</span></div>
</div>
<svg style="position:absolute;left:1516px;top:299.5px;" width="20" height="21" viewBox="0 0 20 21"><path d="M0 6 H4 M0 10 H4 M0 14 H4 M16 6 H20 M16 14 H20" stroke="#1818ff" stroke-width="1.4"/><rect x="4.5" y="2.5" width="11" height="15" fill="#7c8cff" stroke="#1818ff" stroke-width="1.4"/><text x="7" y="14" font-size="10" font-family="Liberation Sans" font-weight="bold" fill="#f0e040">?</text></svg>
<div class="t" style="left:1543.5px;top:303.0px;font-size:14px;color:#000;"><span style="font-size:15px">运算块</span></div>
<div style="left:1686px;top:297.5px;width:116px;height:26px;overflow:hidden">
<div class="t" style="left:0.5px;top:5.5px;font-size:14px;color:#000"><span style="font-size:15px">插入空运算块</span></div>
</div>
<svg style="position:absolute;left:1516px;top:325.75px;" width="20" height="21" viewBox="0 0 20 21"><path d="M0 6 H4 M0 10 H4 M0 14 H4 M16 6 H20 M16 14 H20" stroke="#1818ff" stroke-width="1.4"/><rect x="4.5" y="2.5" width="11" height="15" fill="#7c8cff" stroke="#1818ff" stroke-width="1.4"/><text x="5.5" y="10" font-size="7" font-family="Liberation Sans" font-weight="bold" fill="#f0e040">E</text><text x="9" y="16" font-size="8" font-family="Liberation Sans" font-weight="bold" fill="#f0e040">?</text></svg>
<div class="t" style="left:1543.5px;top:329.25px;font-size:14px;color:#000;"><span style="font-size:15px">带</span>EN/ENO<span style="font-size:15px">运算块</span></div>
<div style="left:1686px;top:323.75px;width:116px;height:26px;overflow:hidden">
<div class="t" style="left:0.5px;top:5.5px;font-size:14px;color:#000"><span style="font-size:15px">插入带有</span>EN/ENO<span style="font-size:15px">运算块</span></div>
</div>
<svg style="position:absolute;left:1516px;top:352.0px;" width="20" height="21" viewBox="0 0 20 21"><path d="M17 1 V20 M9 15 H17" stroke="#1818ff" stroke-width="1.8" fill="none"/><path d="M2 3 L9 10 M9 3 L2 10 M5.5 2 V11 M1 6.5 H10" stroke="#e8d820" stroke-width="1.3"/><path d="M6 10 L10 15" stroke="#404040" stroke-width="1"/></svg>
<div class="t" style="left:1543.5px;top:355.5px;font-size:14px;color:#000;"><span style="font-size:15px">输入</span></div>
<div style="left:1686px;top:350.0px;width:116px;height:26px;overflow:hidden">
<div class="t" style="left:0.5px;top:5.5px;font-size:14px;color:#000"><span style="font-size:15px">可扩展输入运算块</span></div>
</div>
<svg style="position:absolute;left:1516px;top:378.25px;" width="20" height="21" viewBox="0 0 20 21"><path d="M1 10 H10" stroke="#1818ff" stroke-width="1.6"/><path d="M10 5.5 L16 10 L10 14.5Z" fill="none" stroke="#1818ff" stroke-width="1.6"/></svg>
<div class="t" style="left:1543.5px;top:381.75px;font-size:14px;color:#000;"><span style="font-size:15px">跳转</span></div>
<div style="left:1686px;top:376.25px;width:116px;height:26px;overflow:hidden">
<div class="t" style="left:0.5px;top:5.5px;font-size:14px;color:#000"><span style="font-size:15px">跳转至标签</span></div>
</div>
<svg style="position:absolute;left:1516px;top:404.5px;" width="20" height="21" viewBox="0 0 20 21"><path d="M0.5 10 L5 6 V14Z" fill="#1818ff"/><text x="5.5" y="13.5" font-size="8.5" font-family="Liberation Sans" font-weight="bold" fill="#000">RET</text></svg>
<div class="t" style="left:1543.5px;top:408.0px;font-size:14px;color:#000;"><span style="font-size:15px">返回</span></div>
<div style="left:1686px;top:402.5px;width:116px;height:26px;overflow:hidden">
<div class="t" style="left:0.5px;top:5.5px;font-size:14px;color:#000"><span style="font-size:15px">返回到</span>POU<span style="font-size:15px">调用位置</span></div>
</div>
<svg style="position:absolute;left:1516px;top:430.75px;" width="20" height="21" viewBox="0 0 20 21"><path d="M2 6 H17 M10 6 V14.5 H19" stroke="#1818ff" stroke-width="1.6" fill="none"/><circle cx="10" cy="6" r="1.6" fill="#1818ff"/></svg>
<div class="t" style="left:1543.5px;top:434.25px;font-size:14px;color:#000;"><span style="font-size:15px">分支</span></div>
<div style="left:1686px;top:428.75px;width:116px;height:26px;overflow:hidden">
<div class="t" style="left:0.5px;top:5.5px;font-size:14px;color:#000"><span style="font-size:15px">插入新的分支</span></div>
</div>
<svg style="position:absolute;left:1516px;top:457.0px;" width="20" height="21" viewBox="0 0 20 21"><path d="M0 5.5 H4 M16 5.5 H20" stroke="#1818ff" stroke-width="1.4"/><rect x="4" y="1.5" width="12" height="17" fill="#7c8cff" stroke="#1818ff" stroke-width="1.4"/><text x="6.5" y="9.5" font-size="7.5" font-family="Liberation Sans" font-weight="bold" fill="#000">E</text><text x="9" y="16.5" font-size="7.5" font-family="Liberation Sans" font-weight="bold" fill="#000">X</text></svg>
<div class="t" style="left:1543.5px;top:460.5px;font-size:14px;color:#000;"><span style="font-size:15px">执行块</span></div>
<div style="left:1686px;top:455.0px;width:116px;height:26px;overflow:hidden">
<div class="t" style="left:0.5px;top:5.5px;font-size:14px;color:#000"><span style="font-size:15px">插入</span>ST<span style="font-size:15px">程序段</span></div>
</div>
<div style="left:1491px;top:481.25px;width:194px;height:262.5px;background:#f0f0f0"></div>
<svg style="position:absolute;left:1473px;top:488.75px;" width="11" height="11" viewBox="0 0 11 11"><rect x="0.5" y="0.5" width="10" height="10" fill="#f4f4f4" stroke="#9fc8c8"/><path d="M2.5 5.5 H8.5" stroke="#202020" stroke-width="1.6"/><path d="M5.5 2.5 V8.5" stroke="#202020" stroke-width="1.6"/></svg>
<svg style="position:absolute;left:1492px;top:486.25px;" width="19" height="16" viewBox="0 0 19 16"><defs><linearGradient id="fg" x1="0" y1="0" x2="0" y2="1"><stop offset="0" stop-color="#fff2b0"/><stop offset="1" stop-color="#d9a020"/></linearGradient></defs>
<path d="M1 3 H7 L8.5 1 H12 V3 H17.5 V15 H1Z" fill="#e8c560" stroke="#a07820" stroke-width="0.8"/><path d="M1 6 H17.5 V15 H1Z" fill="url(#fg)" stroke="#a07820" stroke-width="0.8"/></svg>
<div class="t" style="left:1518.5px;top:485.75px;font-size:15px;color:#000;"><span style="font-size:15px">位逻辑运算</span></div>
<svg style="position:absolute;left:1473px;top:515.0px;" width="11" height="11" viewBox="0 0 11 11"><rect x="0.5" y="0.5" width="10" height="10" fill="#f4f4f4" stroke="#9fc8c8"/><path d="M2.5 5.5 H8.5" stroke="#202020" stroke-width="1.6"/><path d="M5.5 2.5 V8.5" stroke="#202020" stroke-width="1.6"/></svg>
<svg style="position:absolute;left:1492px;top:512.5px;" width="19" height="16" viewBox="0 0 19 16"><defs><linearGradient id="fg" x1="0" y1="0" x2="0" y2="1"><stop offset="0" stop-color="#fff2b0"/><stop offset="1" stop-color="#d9a020"/></linearGradient></defs>
<path d="M1 3 H7 L8.5 1 H12 V3 H17.5 V15 H1Z" fill="#e8c560" stroke="#a07820" stroke-width="0.8"/><path d="M1 6 H17.5 V15 H1Z" fill="url(#fg)" stroke="#a07820" stroke-width="0.8"/></svg>
<div class="t" style="left:1518.5px;top:512.0px;font-size:15px;color:#000;"><span style="font-size:15px">字逻辑运算</span></div>
<svg style="position:absolute;left:1473px;top:541.25px;" width="11" height="11" viewBox="0 0 11 11"><rect x="0.5" y="0.5" width="10" height="10" fill="#f4f4f4" stroke="#9fc8c8"/><path d="M2.5 5.5 H8.5" stroke="#202020" stroke-width="1.6"/><path d="M5.5 2.5 V8.5" stroke="#202020" stroke-width="1.6"/></svg>
<svg style="position:absolute;left:1492px;top:538.75px;" width="19" height="16" viewBox="0 0 19 16"><defs><linearGradient id="fg" x1="0" y1="0" x2="0" y2="1"><stop offset="0" stop-color="#fff2b0"/><stop offset="1" stop-color="#d9a020"/></linearGradient></defs>
<path d="M1 3 H7 L8.5 1 H12 V3 H17.5 V15 H1Z" fill="#e8c560" stroke="#a07820" stroke-width="0.8"/><path d="M1 6 H17.5 V15 H1Z" fill="url(#fg)" stroke="#a07820" stroke-width="0.8"/></svg>
<div class="t" style="left:1518.5px;top:538.25px;font-size:15px;color:#000;"><span style="font-size:15px">选择</span></div>
<svg style="position:absolute;left:1473px;top:567.5px;" width="11" height="11" viewBox="0 0 11 11"><rect x="0.5" y="0.5" width="10" height="10" fill="#f4f4f4" stroke="#9fc8c8"/><path d="M2.5 5.5 H8.5" stroke="#202020" stroke-width="1.6"/><path d="M5.5 2.5 V8.5" stroke="#202020" stroke-width="1.6"/></svg>
<svg style="position:absolute;left:1492px;top:565.0px;" width="19" height="16" viewBox="0 0 19 16"><defs><linearGradient id="fg" x1="0" y1="0" x2="0" y2="1"><stop offset="0" stop-color="#fff2b0"/><stop offset="1" stop-color="#d9a020"/></linearGradient></defs>
<path d="M1 3 H7 L8.5 1 H12 V3 H17.5 V15 H1Z" fill="#e8c560" stroke="#a07820" stroke-width="0.8"/><path d="M1 6 H17.5 V15 H1Z" fill="url(#fg)" stroke="#a07820" stroke-width="0.8"/></svg>
<div class="t" style="left:1518.5px;top:564.5px;font-size:15px;color:#000;"><span style="font-size:15px">定时器</span></div>
<svg style="position:absolute;left:1473px;top:593.75px;" width="11" height="11" viewBox="0 0 11 11"><rect x="0.5" y="0.5" width="10" height="10" fill="#f4f4f4" stroke="#9fc8c8"/><path d="M2.5 5.5 H8.5" stroke="#202020" stroke-width="1.6"/><path d="M5.5 2.5 V8.5" stroke="#202020" stroke-width="1.6"/></svg>
<svg style="position:absolute;left:1492px;top:591.25px;" width="19" height="16" viewBox="0 0 19 16"><defs><linearGradient id="fg" x1="0" y1="0" x2="0" y2="1"><stop offset="0" stop-color="#fff2b0"/><stop offset="1" stop-color="#d9a020"/></linearGradient></defs>
<path d="M1 3 H7 L8.5 1 H12 V3 H17.5 V15 H1Z" fill="#e8c560" stroke="#a07820" stroke-width="0.8"/><path d="M1 6 H17.5 V15 H1Z" fill="url(#fg)" stroke="#a07820" stroke-width="0.8"/></svg>
<div class="t" style="left:1518.5px;top:590.75px;font-size:15px;color:#000;"><span style="font-size:15px">计数器</span></div>
<svg style="position:absolute;left:1473px;top:620.0px;" width="11" height="11" viewBox="0 0 11 11"><rect x="0.5" y="0.5" width="10" height="10" fill="#f4f4f4" stroke="#9fc8c8"/><path d="M2.5 5.5 H8.5" stroke="#202020" stroke-width="1.6"/><path d="M5.5 2.5 V8.5" stroke="#202020" stroke-width="1.6"/></svg>
<svg style="position:absolute;left:1492px;top:617.5px;" width="19" height="16" viewBox="0 0 19 16"><defs><linearGradient id="fg" x1="0" y1="0" x2="0" y2="1"><stop offset="0" stop-color="#fff2b0"/><stop offset="1" stop-color="#d9a020"/></linearGradient></defs>
<path d="M1 3 H7 L8.5 1 H12 V3 H17.5 V15 H1Z" fill="#e8c560" stroke="#a07820" stroke-width="0.8"/><path d="M1 6 H17.5 V15 H1Z" fill="url(#fg)" stroke="#a07820" stroke-width="0.8"/></svg>
<div class="t" style="left:1518.5px;top:617.0px;font-size:15px;color:#000;"><span style="font-size:15px">比较器</span></div>
<svg style="position:absolute;left:1473px;top:646.25px;" width="11" height="11" viewBox="0 0 11 11"><rect x="0.5" y="0.5" width="10" height="10" fill="#f4f4f4" stroke="#9fc8c8"/><path d="M2.5 5.5 H8.5" stroke="#202020" stroke-width="1.6"/><path d="M5.5 2.5 V8.5" stroke="#202020" stroke-width="1.6"/></svg>
<svg style="position:absolute;left:1492px;top:643.75px;" width="19" height="16" viewBox="0 0 19 16"><defs><linearGradient id="fg" x1="0" y1="0" x2="0" y2="1"><stop offset="0" stop-color="#fff2b0"/><stop offset="1" stop-color="#d9a020"/></linearGradient></defs>
<path d="M1 3 H7 L8.5 1 H12 V3 H17.5 V15 H1Z" fill="#e8c560" stroke="#a07820" stroke-width="0.8"/><path d="M1 6 H17.5 V15 H1Z" fill="url(#fg)" stroke="#a07820" stroke-width="0.8"/></svg>
<div class="t" style="left:1518.5px;top:643.25px;font-size:15px;color:#000;"><span style="font-size:15px">数学函数</span></div>
<svg style="position:absolute;left:1473px;top:672.5px;" width="11" height="11" viewBox="0 0 11 11"><rect x="0.5" y="0.5" width="10" height="10" fill="#f4f4f4" stroke="#9fc8c8"/><path d="M2.5 5.5 H8.5" stroke="#202020" stroke-width="1.6"/><path d="M5.5 2.5 V8.5" stroke="#202020" stroke-width="1.6"/></svg>
<svg style="position:absolute;left:1492px;top:670.0px;" width="19" height="16" viewBox="0 0 19 16"><defs><linearGradient id="fg" x1="0" y1="0" x2="0" y2="1"><stop offset="0" stop-color="#fff2b0"/><stop offset="1" stop-color="#d9a020"/></linearGradient></defs>
<path d="M1 3 H7 L8.5 1 H12 V3 H17.5 V15 H1Z" fill="#e8c560" stroke="#a07820" stroke-width="0.8"/><path d="M1 6 H17.5 V15 H1Z" fill="url(#fg)" stroke="#a07820" stroke-width="0.8"/></svg>
<div class="t" style="left:1518.5px;top:669.5px;font-size:15px;color:#000;"><span style="font-size:15px">数据处理</span></div>
<svg style="position:absolute;left:1473px;top:698.75px;" width="11" height="11" viewBox="0 0 11 11"><rect x="0.5" y="0.5" width="10" height="10" fill="#f4f4f4" stroke="#9fc8c8"/><path d="M2.5 5.5 H8.5" stroke="#202020" stroke-width="1.6"/><path d="M5.5 2.5 V8.5" stroke="#202020" stroke-width="1.6"/></svg>
<svg style="position:absolute;left:1492px;top:696.25px;" width="19" height="16" viewBox="0 0 19 16"><defs><linearGradient id="fg" x1="0" y1="0" x2="0" y2="1"><stop offset="0" stop-color="#fff2b0"/><stop offset="1" stop-color="#d9a020"/></linearGradient></defs>
<path d="M1 3 H7 L8.5 1 H12 V3 H17.5 V15 H1Z" fill="#e8c560" stroke="#a07820" stroke-width="0.8"/><path d="M1 6 H17.5 V15 H1Z" fill="url(#fg)" stroke="#a07820" stroke-width="0.8"/></svg>
<div class="t" style="left:1518.5px;top:695.75px;font-size:15px;color:#000;"><span style="font-size:15px">数据转换</span></div>
<svg style="position:absolute;left:1473px;top:725.0px;" width="11" height="11" viewBox="0 0 11 11"><rect x="0.5" y="0.5" width="10" height="10" fill="#f4f4f4" stroke="#9fc8c8"/><path d="M2.5 5.5 H8.5" stroke="#202020" stroke-width="1.6"/><path d="M5.5 2.5 V8.5" stroke="#202020" stroke-width="1.6"/></svg>
<svg style="position:absolute;left:1492px;top:722.5px;" width="19" height="16" viewBox="0 0 19 16"><defs><linearGradient id="fg" x1="0" y1="0" x2="0" y2="1"><stop offset="0" stop-color="#fff2b0"/><stop offset="1" stop-color="#d9a020"/></linearGradient></defs>
<path d="M1 3 H7 L8.5 1 H12 V3 H17.5 V15 H1Z" fill="#e8c560" stroke="#a07820" stroke-width="0.8"/><path d="M1 6 H17.5 V15 H1Z" fill="url(#fg)" stroke="#a07820" stroke-width="0.8"/></svg>
<div class="t" style="left:1518.5px;top:722.0px;font-size:15px;color:#000;"><span style="font-size:15px">数据移位</span></div>
<div style="left:1465px;top:809px;width:337px;height:19px;background:#f0f0f0"></div>
<div style="left:1488px;top:810px;width:208px;height:17px;background:#cdcdcd"></div>
<svg style="position:absolute;left:1470px;top:812px;" width="10" height="13" viewBox="0 0 10 13"><path d="M8 2 L3 6.5 L8 11" fill="none" stroke="#505050" stroke-width="1.8"/></svg>
<svg style="position:absolute;left:1786px;top:812px;" width="10" height="13" viewBox="0 0 10 13"><path d="M2 2 L7 6.5 L2 11" fill="none" stroke="#505050" stroke-width="1.8"/></svg>
<div style="left:1465px;top:832.7px;width:338px;height:24px;background:#e1e1e1;border:1px solid #c0c0c0;box-sizing:border-box"></div>
<svg style="position:absolute;left:1474px;top:836.7px;" width="10" height="17" viewBox="0 0 10 17"><path d="M1 1 L9.5 8.5 L1 16Z" fill="#606060"/></svg>
<div class="t acc" style="left:1490px;top:837.7px;font-size:14px;color:#000;font-weight:bold;"><span style="font-size:15px">扩展指令</span></div>
<div style="left:1465px;top:860.25px;width:338px;height:24px;background:#e1e1e1;border:1px solid #c0c0c0;box-sizing:border-box"></div>
<svg style="position:absolute;left:1474px;top:864.25px;" width="10" height="17" viewBox="0 0 10 17"><path d="M1 1 L9.5 8.5 L1 16Z" fill="#606060"/></svg>
<div class="t acc" style="left:1490px;top:865.25px;font-size:14px;color:#000;font-weight:bold;"><span style="font-size:15px">运动控制指令</span></div>
<div style="left:1465px;top:887.8000000000001px;width:338px;height:24px;background:#e1e1e1;border:1px solid #c0c0c0;box-sizing:border-box"></div>
<svg style="position:absolute;left:1474px;top:891.8000000000001px;" width="10" height="17" viewBox="0 0 10 17"><path d="M1 1 L9.5 8.5 L1 16Z" fill="#606060"/></svg>
<div class="t acc" style="left:1490px;top:892.8000000000001px;font-size:14px;color:#000;font-weight:bold;"><span style="font-size:15px">高速</span>I/O<span style="font-size:15px">指令</span></div>
<div style="left:1465px;top:915.35px;width:338px;height:24px;background:#e1e1e1;border:1px solid #c0c0c0;box-sizing:border-box"></div>
<svg style="position:absolute;left:1474px;top:919.35px;" width="10" height="17" viewBox="0 0 10 17"><path d="M1 1 L9.5 8.5 L1 16Z" fill="#606060"/></svg>
<div class="t acc" style="left:1490px;top:920.35px;font-size:14px;color:#000;font-weight:bold;">CANopen<span style="font-size:15px">轴控指令</span></div>
<div style="left:1465px;top:942.9000000000001px;width:338px;height:24px;background:#e1e1e1;border:1px solid #c0c0c0;box-sizing:border-box"></div>
<svg style="position:absolute;left:1474px;top:946.9000000000001px;" width="10" height="17" viewBox="0 0 10 17"><path d="M1 1 L9.5 8.5 L1 16Z" fill="#606060"/></svg>
<div class="t acc" style="left:1490px;top:947.9000000000001px;font-size:14px;color:#000;font-weight:bold;"><span style="font-size:15px">通信指令</span></div>
<div style="left:1465px;top:970.45px;width:338px;height:24px;background:#e1e1e1;border:1px solid #c0c0c0;box-sizing:border-box"></div>
<svg style="position:absolute;left:1474px;top:974.45px;" width="10" height="17" viewBox="0 0 10 17"><path d="M1 1 L9.5 8.5 L1 16Z" fill="#606060"/></svg>
<div class="t acc" style="left:1490px;top:975.45px;font-size:14px;color:#000;font-weight:bold;"><span style="font-size:15px">自定义</span>...</div>
<div style="left:1465px;top:998.0px;width:338px;height:24px;background:#e1e1e1;border:1px solid #c0c0c0;box-sizing:border-box"></div>
<svg style="position:absolute;left:1474px;top:1002.0px;" width="10" height="17" viewBox="0 0 10 17"><path d="M1 1 L9.5 8.5 L1 16Z" fill="#606060"/></svg>
<div class="t acc" style="left:1490px;top:1003.0px;font-size:14px;color:#000;font-weight:bold;">POUs</div>
<svg style="position:absolute;left:11px;top:69px;" width="20" height="20" viewBox="0 0 20 20"><defs><radialGradient id="gb" cx="0.4" cy="0.3" r="0.8"><stop offset="0" stop-color="#a0f080"/><stop offset="1" stop-color="#10a010"/></radialGradient></defs><circle cx="10" cy="10" r="9.5" fill="url(#gb)"/><path d="M15 10 H6 M10 5 L5 10 L10 15" stroke="#fff" stroke-width="2.6" fill="none"/></svg>
<svg style="position:absolute;left:40px;top:69px;" width="20" height="20" viewBox="0 0 20 20"><circle cx="10" cy="10" r="9.5" fill="#d4d4d4"/><path d="M5 10 H14 M10 5 L15 10 L10 15" stroke="#f4f4f4" stroke-width="2.6" fill="none"/></svg>
<div style="left:68px;top:70px;width:1px;height:17px;background:#a8a8a8"></div>
<svg style="position:absolute;left:76px;top:68px;" width="21" height="21" viewBox="0 0 21 21"><path d="M5 3 H14 L19 8 V20 H5Z" fill="#fff" stroke="#404040"/><path d="M8 9 H16 M8 12 H16 M8 15 H16" stroke="#404040"/><path d="M1 1 L6 6 M6 1 L1 6 M3.5 0 V7 M0 3.5 H7" stroke="#f0e020" stroke-width="1.2"/></svg>
<svg style="position:absolute;left:105px;top:68px;" width="21" height="21" viewBox="0 0 21 21"><path d="M1 6 H7 L9 4 H15 V18 H1Z" fill="#c8c020" stroke="#605010"/><path d="M1 18 L5 10 H20 L15 18Z" fill="#f0e070" stroke="#605010"/><path d="M12 4 Q16 0 19 4" fill="none" stroke="#404040" stroke-width="1.5"/></svg>
<svg style="position:absolute;left:135px;top:69px;" width="19" height="19" viewBox="0 0 19 19"><rect x="1" y="1" width="17" height="17" fill="#a09a30" stroke="#303030"/><rect x="4" y="2" width="10" height="7" fill="#e8e8e8"/><rect x="5" y="12" width="9" height="6" fill="#303030"/><rect x="10" y="13" width="2" height="4" fill="#fff"/></svg>
<div style="left:163px;top:70px;width:1px;height:17px;background:#a8a8a8"></div>
<svg style="position:absolute;left:171px;top:69px;" width="21" height="19" viewBox="0 0 21 19"><rect x="5" y="1" width="11" height="6" fill="#fff" stroke="#505050"/><rect x="1" y="6" width="19" height="9" rx="2" fill="#909090" stroke="#404040"/><rect x="4" y="13" width="13" height="4" fill="#606060"/><path d="M11 10 H15" stroke="#e0d020" stroke-width="1.5"/></svg>
<div style="left:201px;top:70px;width:1px;height:17px;background:#a8a8a8"></div>
<svg style="position:absolute;left:211px;top:71px;" width="16" height="14" viewBox="0 0 16 14"><path d="M4 9 Q4 3 9 3 Q14 3 14 9" fill="none" stroke="#c0c0c0" stroke-width="1.6"/><path d="M1 6 L4 11 L8 7Z" fill="#c0c0c0"/></svg>
<svg style="position:absolute;left:240px;top:71px;" width="16" height="14" viewBox="0 0 16 14"><path d="M2 9 Q2 3 7 3 Q12 3 12 9" fill="none" stroke="#c0c0c0" stroke-width="1.6"/><path d="M15 6 L12 11 L8 7Z" fill="#c0c0c0"/></svg>
<svg style="position:absolute;left:269px;top:68px;" width="14" height="22" viewBox="0 0 14 22"><path d="M4 1 L8 13 M10 1 L6 13" stroke="#303030" stroke-width="1.3"/><circle cx="4" cy="17" r="3" fill="none" stroke="#2020c0" stroke-width="1.6"/><circle cx="10" cy="17" r="3" fill="none" stroke="#2020c0" stroke-width="1.6"/></svg>
<svg style="position:absolute;left:295px;top:69px;" width="20" height="19" viewBox="0 0 20 19"><path d="M1 1 H9 L11 3 V13 H1Z" fill="#fff" stroke="#303030"/><path d="M3 5 H9 M3 8 H9" stroke="#303030"/><path d="M8 7 H16 L19 10 V18 H8Z" fill="#fff" stroke="#2020a0"/><path d="M10 12 H17 M10 15 H17" stroke="#2020a0"/></svg>
<svg style="position:absolute;left:324px;top:69px;" width="21" height="19" viewBox="0 0 21 19"><rect x="1" y="3" width="15" height="15" rx="2" fill="#e0e0e0" stroke="#c0c0c0"/><rect x="9" y="10" width="11" height="8" fill="#f0f0f0" stroke="#c8c8c8"/></svg>
<svg style="position:absolute;left:353px;top:69px;" width="18" height="18" viewBox="0 0 18 18"><path d="M2 2 L16 16 M16 2 L2 16" stroke="#202020" stroke-width="2"/></svg>
<div style="left:382px;top:70px;width:1px;height:17px;background:#a8a8a8"></div>
<svg style="position:absolute;left:390px;top:69px;" width="20" height="18" viewBox="0 0 20 18"><rect x="1" y="6" width="7" height="11" fill="#303030"/><rect x="12" y="6" width="7" height="11" fill="#303030"/><rect x="3" y="1" width="4" height="6" fill="#303030"/><rect x="13" y="1" width="4" height="6" fill="#303030"/><rect x="7" y="7" width="6" height="4" fill="#505050"/></svg>
<svg style="position:absolute;left:419px;top:68px;" width="21" height="20" viewBox="0 0 21 20"><text x="1" y="8" font-size="8" font-family="Liberation Sans" fill="#606060">A</text><text x="13" y="19" font-size="8" font-family="Liberation Sans" fill="#909090">B</text><path d="M4 10 Q4 17 11 17 M14 3 Q17 6 15 12" fill="none" stroke="#505050" stroke-dasharray="1.5 1.5"/></svg>
<div style="left:448px;top:70px;width:1px;height:17px;background:#a8a8a8"></div>
<svg style="position:absolute;left:456px;top:69px;" width="21" height="19" viewBox="0 0 21 19"><path d="M2 18 L12 6" stroke="#303030" stroke-width="1.2"/><path d="M9 8 L14 3 L20 9 L15 14Z" fill="#1a3ae0"/><path d="M15 14 L20 9 V11 L16 16Z" fill="#0a1a80"/></svg>
<svg style="position:absolute;left:485px;top:69px;" width="21" height="19" viewBox="0 0 21 19"><path d="M2 18 L12 6" stroke="#303030" stroke-width="1.2"/><path d="M9 8 L14 3 L20 9 L15 14Z" fill="#1a3ae0"/><path d="M15 14 L20 9 V11 L16 16Z" fill="#0a1a80"/><path d="M1 3 H6 M4 0 L7 3 L4 6" stroke="#303030" stroke-width="2" fill="none"/></svg>
<svg style="position:absolute;left:514px;top:69px;" width="21" height="19" viewBox="0 0 21 19"><path d="M2 18 L12 6" stroke="#303030" stroke-width="1.2"/><path d="M9 8 L14 3 L20 9 L15 14Z" fill="#1a3ae0"/><path d="M15 14 L20 9 V11 L16 16Z" fill="#0a1a80"/><path d="M7 3 H2 M4 0 L1 3 L4 6" stroke="#303030" stroke-width="2" fill="none"/></svg>
<svg style="position:absolute;left:542px;top:69px;" width="21" height="19" viewBox="0 0 21 19"><path d="M2 18 L12 6" stroke="#303030" stroke-width="1.2"/><path d="M9 8 L14 3 L20 9 L15 14Z" fill="#1a3ae0"/><path d="M15 14 L20 9 V11 L16 16Z" fill="#0a1a80"/><path d="M1 0 L9 8 M9 0 L1 8" stroke="#c02020" stroke-width="2"/></svg>
<div style="left:571px;top:70px;width:1px;height:17px;background:#a8a8a8"></div>
<svg style="position:absolute;left:580px;top:69px;" width="20" height="19" viewBox="0 0 20 19"><rect x="1" y="2" width="13" height="14" fill="#e8e8e8" stroke="#404040"/><rect x="7" y="9" width="12" height="9" fill="#fff" stroke="#404040"/><path d="M9 12 H17 M9 15 H17" stroke="#2020c0" stroke-width="1.3"/></svg>
<div style="left:609px;top:70px;width:1px;height:17px;background:#a8a8a8"></div>
<svg style="position:absolute;left:617px;top:68px;" width="21" height="20" viewBox="0 0 21 20"><rect x="3" y="7" width="17" height="12" fill="#fff" stroke="#404040"/><circle cx="7" cy="10" r="1" fill="#e02020"/><circle cx="11" cy="10" r="1" fill="#20a020"/><circle cx="15" cy="10" r="1" fill="#2020e0"/><circle cx="7" cy="15" r="1" fill="#20c0c0"/><circle cx="11" cy="15" r="1" fill="#e02020"/><circle cx="15" cy="15" r="1" fill="#20a020"/><path d="M1 1 L7 7 M7 1 L1 7 M4 0 V8 M0 4 H8" stroke="#f0e020" stroke-width="1.2"/></svg>
<svg style="position:absolute;left:645px;top:77px;" width="8" height="4" viewBox="0 0 8 4"><path d="M0 0 H8 L4.0 4Z" fill="#000"/></svg>
<svg style="position:absolute;left:661px;top:68px;" width="20" height="21" viewBox="0 0 20 21"><path d="M2 7 H9 L12 10 V20 H2Z" fill="#fff" stroke="#404040"/><path d="M11 4 Q15 0 18 4" fill="none" stroke="#404040" stroke-width="1.5"/><path d="M18 2 V6 H14" fill="none" stroke="#404040"/></svg>
<div style="left:689px;top:70px;width:1px;height:17px;background:#a8a8a8"></div>
<svg style="position:absolute;left:697px;top:69px;" width="21" height="19" viewBox="0 0 21 19"><rect x="1" y="9" width="19" height="9" fill="#fff" stroke="#303030"/><path d="M3 3 H18" stroke="#4040c0" stroke-dasharray="1.5 1"/><path d="M6 3 V10 M15 3 V10" stroke="#1a3ac0" stroke-width="1.6"/><path d="M3 8 L6 12 L9 8 M12 8 L15 12 L18 8" fill="#1a3ac0"/><path d="M3 14 H18" stroke="#606060" stroke-dasharray="1.5 1.5"/></svg>
<svg style="position:absolute;left:727px;top:68px;" width="19" height="20" viewBox="0 0 19 20"><rect x="1" y="10" width="17" height="9" fill="#fff" stroke="#303030"/><path d="M9.5 0 V9" stroke="#303030" stroke-width="2"/><path d="M5 5 L9.5 10 L14 5Z" fill="#303030"/><path d="M4 14 H16" stroke="#303030" stroke-dasharray="2 2"/></svg>
<div style="left:755px;top:70px;width:1px;height:17px;background:#a8a8a8"></div>
<svg style="position:absolute;left:764px;top:68px;" width="21" height="21" viewBox="0 0 21 21"><circle cx="9" cy="9" r="6" fill="none" stroke="#6a6ab8" stroke-width="4"/><circle cx="17" cy="4" r="3" fill="#10c020"/><rect x="13" y="12" width="6" height="6" fill="#404040"/><path d="M10 19 L14 15" stroke="#404040" stroke-width="1.5"/></svg>
<svg style="position:absolute;left:793px;top:68px;" width="21" height="21" viewBox="0 0 21 21"><circle cx="9" cy="9" r="6" fill="none" stroke="#d0d0d0" stroke-width="4"/><path d="M14 1 L19 6 M19 1 L14 6" stroke="#c8c8c8" stroke-width="1.5"/><path d="M12 14 H18 V18" stroke="#d0d0d0"/></svg>
<svg style="position:absolute;left:832px;top:73px;" width="9" height="12" viewBox="0 0 9 12"><path d="M1 1 L8 6 L1 11Z" fill="#c0c0c0"/></svg>
<div style="left:859px;top:76px;width:10px;height:10px;background:#c0c0c0"></div>
<svg style="position:absolute;left:880px;top:68px;" width="20" height="20" viewBox="0 0 20 20"><path d="M3 5 L15 17" stroke="#b0b0b0" stroke-width="3.5"/><circle cx="4" cy="5" r="3.5" fill="#b0b0b0"/><circle cx="16" cy="4" r="2" fill="none" stroke="#b0b0b0" stroke-width="1.5"/></svg>
<svg style="position:absolute;left:908px;top:68px;" width="20" height="20" viewBox="0 0 20 20"><rect x="1" y="3" width="16" height="16" fill="none" stroke="#b0b0b0" stroke-width="2"/><path d="M5 15 L17 3" stroke="#b0b0b0" stroke-width="2.5"/></svg>
<div style="left:937px;top:70px;width:1px;height:17px;background:#a8a8a8"></div>
<svg style="position:absolute;left:945px;top:68px;" width="20" height="20" viewBox="0 0 20 20"><path d="M1 2 V17 M1 2 H4" stroke="#b8b8b8" stroke-width="1.2" fill="none"/><path d="M10 4 H19 M10 8 H19 M10 12 H19 M10 16 H19" stroke="#b8b8b8" stroke-width="1.4"/><path d="M2 14 L5 18 L7 14" fill="#b8b8b8"/></svg>
<svg style="position:absolute;left:973px;top:68px;" width="20" height="20" viewBox="0 0 20 20"><path d="M1 2 V17 M1 2 H4" stroke="#b8b8b8" stroke-width="1.2" fill="none"/><path d="M10 4 H19 M10 8 H19 M10 12 H19 M10 16 H19" stroke="#b8b8b8" stroke-width="1.4"/><path d="M2 14 L5 18 L7 14" fill="#b8b8b8"/></svg>
<svg style="position:absolute;left:1002px;top:68px;" width="20" height="20" viewBox="0 0 20 20"><path d="M1 2 V17 M1 2 H4" stroke="#b8b8b8" stroke-width="1.2" fill="none"/><path d="M10 4 H19 M10 8 H19 M10 12 H19 M10 16 H19" stroke="#b8b8b8" stroke-width="1.4"/><path d="M2 14 L5 18 L7 14" fill="#b8b8b8"/></svg>
<svg style="position:absolute;left:1030px;top:68px;" width="20" height="20" viewBox="0 0 20 20"><path d="M1 2 V17 M1 2 H4" stroke="#b8b8b8" stroke-width="1.2" fill="none"/><path d="M10 4 H19 M10 8 H19 M10 12 H19 M10 16 H19" stroke="#b8b8b8" stroke-width="1.4"/><path d="M2 14 L5 18 L7 14" fill="#b8b8b8"/></svg>
<svg style="position:absolute;left:1060px;top:68px;" width="16" height="21" viewBox="0 0 16 21"><path d="M3 4 Q8 -1 12 4 L8 9 L12 14 L3 20" fill="none" stroke="#b8b8b8" stroke-width="1.5"/></svg>
<div style="left:1089px;top:70px;width:1px;height:17px;background:#a8a8a8"></div>
<svg style="position:absolute;left:1101px;top:72px;" width="14" height="12" viewBox="0 0 14 12"><path d="M1 4 H7 V1 L13 6 L7 11 V8 H1Z" fill="none" stroke="#a8a8a8" stroke-width="1.2"/></svg>
<div style="left:1127px;top:70px;width:1px;height:17px;background:#a8a8a8"></div>
<svg style="position:absolute;left:1134px;top:68px;" width="22" height="20" viewBox="0 0 22 20"><rect x="1" y="2" width="20" height="6" fill="#a8a8a8"/><rect x="1" y="8" width="20" height="4" fill="#c8c8c8"/><path d="M1 19 L21 1" stroke="#909090" stroke-width="1.5"/><path d="M12 14 H20 M12 17 H20" stroke="#b0b0b0" stroke-width="2"/></svg>
<svg style="position:absolute;left:10px;top:100px;" width="21" height="20" viewBox="0 0 21 20"><path d="M2 3 V19 H20 M2 3 H5 M5 3 V19" stroke="#c0c0c0" stroke-width="1.5" fill="none"/><path d="M8 4 H20 M8 8 H20" stroke="#c0c0c0" stroke-dasharray="1.5 1"/></svg>
<svg style="position:absolute;left:40px;top:100px;" width="19" height="20" viewBox="0 0 19 20"><text x="1" y="14" font-size="11" font-family="Liberation Sans" fill="#c8c8c8">(x x)</text></svg>
<div style="left:68px;top:101px;width:1px;height:17px;background:#a8a8a8"></div>
<svg style="position:absolute;left:77px;top:100px;" width="20" height="20" viewBox="0 0 20 20"><path d="M6 5 L2 10 L6 15 M14 5 L18 10 L14 15" stroke="#b8b8b8" stroke-width="2.5" fill="none"/></svg>
<svg style="position:absolute;left:106px;top:100px;" width="20" height="20" viewBox="0 0 20 20"><path d="M6 5 L2 10 L6 15 M14 5 L18 10 L14 15" stroke="#b8b8b8" stroke-width="2.5" fill="none"/><path d="M8 7 L12 13" stroke="#b8b8b8" stroke-width="1.5"/></svg>
<svg style="position:absolute;left:135px;top:100px;" width="20" height="20" viewBox="0 0 20 20"><path d="M6 5 L2 10 L6 15 M14 5 L18 10 L14 15" stroke="#b8b8b8" stroke-width="2.5" fill="none"/><circle cx="10" cy="10" r="2.5" fill="none" stroke="#b8b8b8" stroke-width="1.5"/></svg>
<div style="left:163px;top:101px;width:1px;height:17px;background:#a8a8a8"></div>
<svg style="position:absolute;left:171px;top:100px;" width="21" height="20" viewBox="0 0 21 20"><rect x="4" y="3" width="13" height="14" fill="#d8d8d8" stroke="#c0c0c0"/><path d="M0 6 H4 M0 14 H4 M17 6 H21 M17 14 H21" stroke="#b8b8b8" stroke-width="1.5"/></svg>
<svg style="position:absolute;left:200px;top:100px;" width="21" height="20" viewBox="0 0 21 20"><rect x="4" y="3" width="13" height="14" fill="#d8d8d8" stroke="#c0c0c0"/><path d="M0 6 H4 M0 14 H4 M17 6 H21 M17 14 H21" stroke="#b8b8b8" stroke-width="1.5"/></svg>
<svg style="position:absolute;left:229px;top:100px;" width="21" height="20" viewBox="0 0 21 20"><rect x="4" y="3" width="13" height="14" fill="#d8d8d8" stroke="#c0c0c0"/><path d="M0 6 H4 M0 14 H4 M17 6 H21 M17 14 H21" stroke="#b8b8b8" stroke-width="1.5"/></svg>
<svg style="position:absolute;left:258px;top:100px;" width="21" height="20" viewBox="0 0 21 20"><rect x="4" y="3" width="13" height="14" fill="#d8d8d8" stroke="#c0c0c0"/><path d="M0 6 H4 M0 14 H4 M17 6 H21 M17 14 H21" stroke="#b8b8b8" stroke-width="1.5"/></svg>
<svg style="position:absolute;left:286px;top:100px;" width="16" height="20" viewBox="0 0 16 20"><path d="M1 10 H14 M9 5 L14 10 L9 15" stroke="#b8b8b8" stroke-width="1.5" fill="none"/></svg>
<svg style="position:absolute;left:317px;top:100px;" width="17" height="20" viewBox="0 0 17 20"><rect x="1" y="6" width="15" height="8" rx="1" fill="none" stroke="#b8b8b8" stroke-width="1.3"/><text x="3" y="12.5" font-size="6" font-family="Liberation Sans" fill="#b8b8b8">LBL</text></svg>
<svg style="position:absolute;left:343px;top:100px;" width="21" height="20" viewBox="0 0 21 20"><path d="M1 10 L5 6 V14Z" fill="#b8b8b8"/><text x="6" y="14" font-size="9" font-family="Liberation Sans" fill="#b8b8b8">RET</text></svg>
<svg style="position:absolute;left:375px;top:100px;" width="16" height="20" viewBox="0 0 16 20"><path d="M14 3 V19 M14 14 H7" stroke="#b8b8b8" stroke-width="1.5"/><path d="M2 3 L7 8 M7 3 L2 8" stroke="#d0d0c0" stroke-width="1.3"/></svg>
<div style="left:402px;top:101px;width:1px;height:17px;background:#a8a8a8"></div>
<svg style="position:absolute;left:411px;top:100px;" width="18" height="20" viewBox="0 0 18 20"><path d="M1 10 H6 M16 3 V18" stroke="#b8b8b8" stroke-width="1.5"/><circle cx="10" cy="10" r="3.5" fill="none" stroke="#b8b8b8" stroke-width="1.5"/></svg>
<svg style="position:absolute;left:440px;top:100px;" width="18" height="20" viewBox="0 0 18 20"><path d="M1 10 H8 M16 3 V18" stroke="#b8b8b8" stroke-width="1.5"/><path d="M8 5 L13 10 L8 15Z" fill="none" stroke="#b8b8b8" stroke-width="1.3"/></svg>
<svg style="position:absolute;left:468px;top:100px;" width="18" height="20" viewBox="0 0 18 20"><path d="M1 10 H5 M16 3 V18" stroke="#b8b8b8" stroke-width="1.5"/><rect x="5" y="5" width="9" height="10" fill="none" stroke="#b8b8b8" stroke-width="1.3"/><text x="7" y="13.5" font-size="8" font-family="Liberation Sans" fill="#b8b8b8">S</text></svg>
<div style="left:497px;top:101px;width:1px;height:17px;background:#a8a8a8"></div>
<svg style="position:absolute;left:506px;top:100px;" width="18" height="20" viewBox="0 0 18 20"><path d="M1 2 L6 7 M6 2 L1 7 M8 8 L15 15 M15 11 V15 H11" stroke="#c8c8c8" stroke-width="1.3" fill="none"/></svg>
<svg style="position:absolute;left:534px;top:100px;" width="20" height="20" viewBox="0 0 20 20"><rect x="1" y="2" width="5" height="16" fill="#d4d4d4" stroke="#c0c0c0"/><path d="M6 7 H12 V4 H19 M6 14 H12" stroke="#b8b8b8" stroke-width="1.5" fill="none"/></svg>
<div style="left:563px;top:101px;width:1px;height:17px;background:#a8a8a8"></div>
<svg style="position:absolute;left:573px;top:100px;" width="18" height="20" viewBox="0 0 18 20"><rect x="1" y="1" width="16" height="17" fill="#e8e8e8" stroke="#c8c8c8"/><path d="M3 12 H15" stroke="#c8c8c8"/></svg>
<svg style="position:absolute;left:601px;top:100px;" width="18" height="20" viewBox="0 0 18 20"><rect x="1" y="3" width="17" height="6" fill="#3a9ae0" stroke="#1a4a80"/><rect x="1" y="11" width="17" height="6" fill="#3a9ae0" stroke="#1a4a80"/></svg>
<div style="left:0px;top:126px;width:1804px;height:2px;background:#b4b4b4"></div>
<div style="left:474px;top:128px;width:5px;height:895px;background:#f0f0f0"></div>
<div style="left:1458px;top:128px;width:6px;height:895px;background:#f0f0f0"></div>
</body></html>
